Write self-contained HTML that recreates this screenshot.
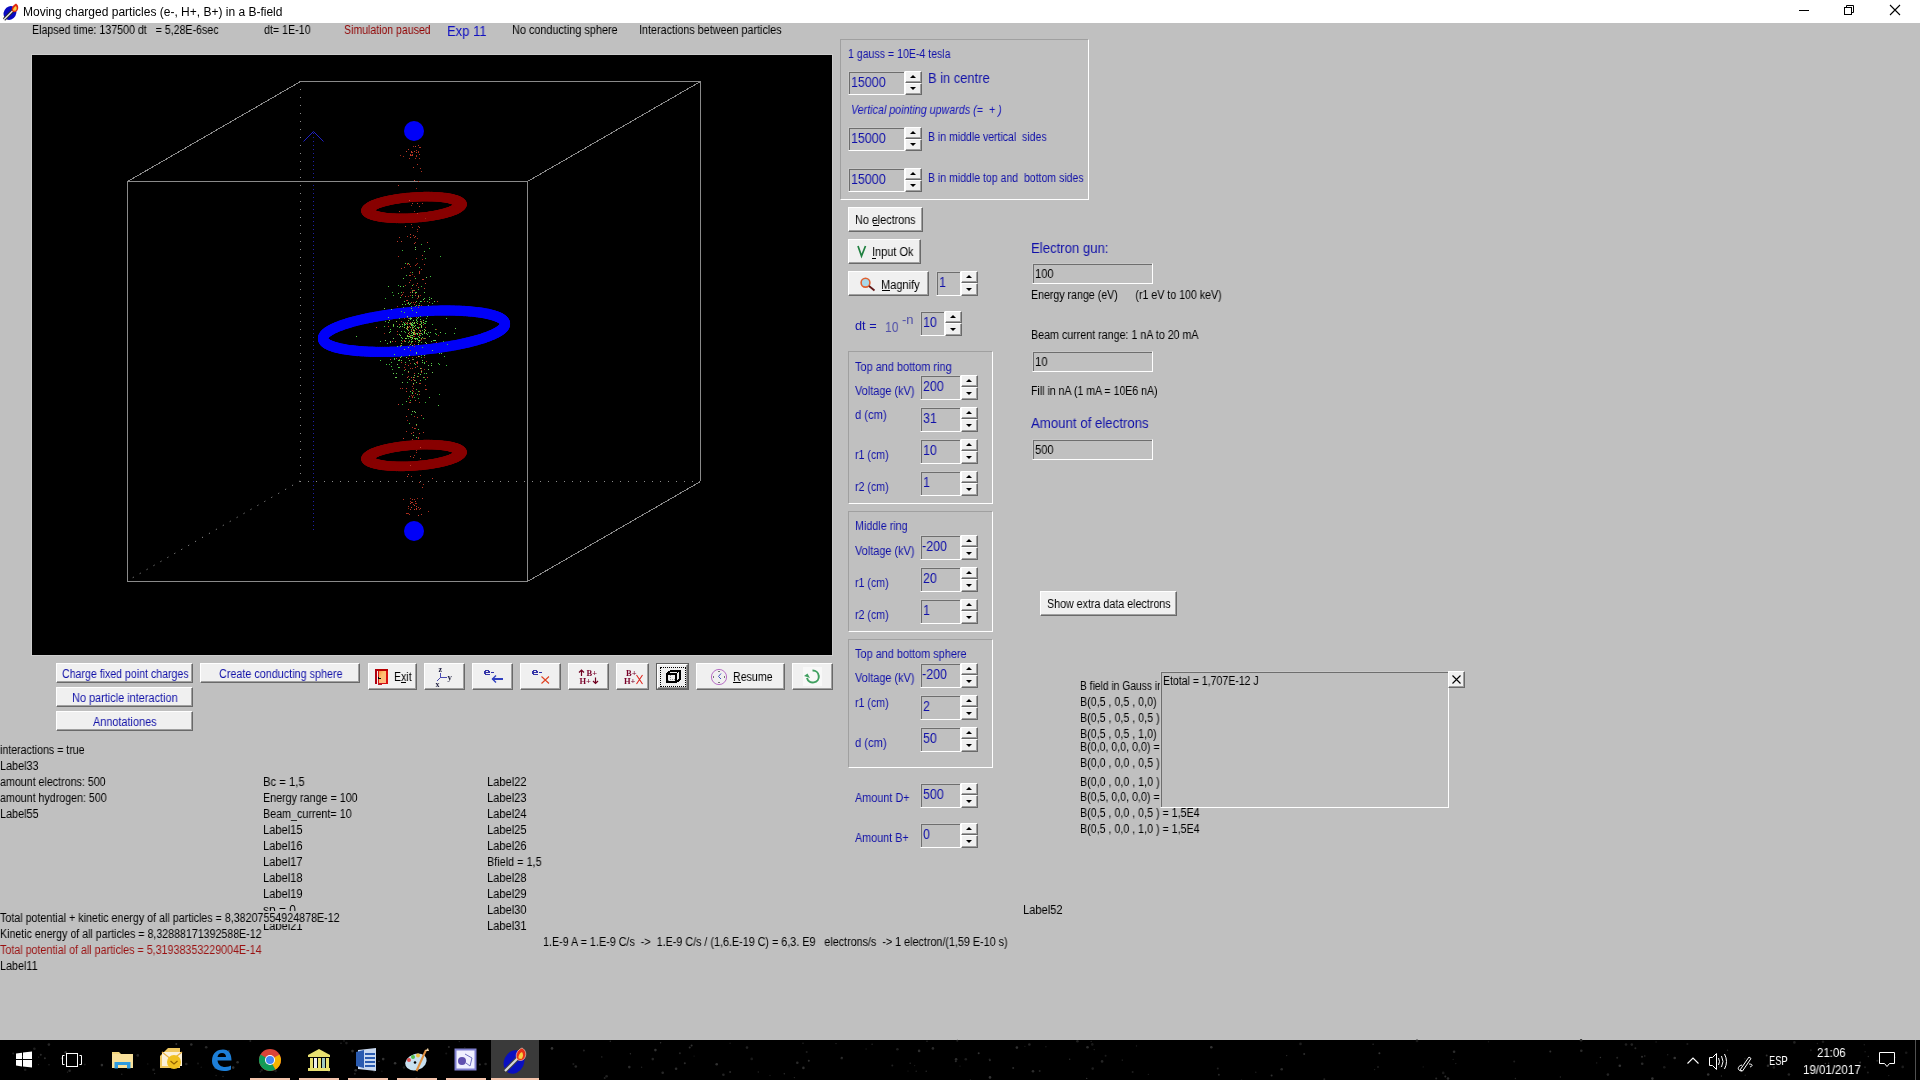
<!DOCTYPE html>
<html><head><meta charset="utf-8"><title>Moving charged particles</title>
<style>
html,body{margin:0;padding:0;}
body{width:1920px;height:1080px;position:relative;overflow:hidden;background:#C0C0C0;font-family:"Liberation Sans",sans-serif;}
.t{position:absolute;white-space:pre;line-height:normal;font-family:"Liberation Sans",sans-serif;will-change:transform;}
.rb{position:absolute;box-sizing:border-box;border:1px solid;border-color:#FFFFFF #696969 #696969 #FFFFFF;box-shadow:inset -1px -1px #A0A0A0;}
.sk{position:absolute;box-sizing:border-box;border:1px solid;border-color:#C8C8C8 #FFFFFF #FFFFFF #C8C8C8;box-shadow:inset 1px 1px #6E6E6E;}
.gb{position:absolute;border:1px solid;border-color:#A0A0A0 #FFFFFF #FFFFFF #A0A0A0;}
svg{position:absolute;overflow:visible;}
</style></head><body>

<div style="position:absolute;left:0px;top:0px;width:1920px;height:23px;background:#FFFFFF"></div>
<svg style="left:2px;top:3px" width="17" height="17" viewBox="0 0 17 17">
<ellipse cx="8" cy="10" rx="6.2" ry="7.2" fill="#0A0AC0" transform="rotate(30 8 10)"/>
<path d="M2 16.5 L11 7.5" stroke="#282828" stroke-width="3.2"/>
<path d="M2 16.5 L11 7.5" stroke="#E8E8E8" stroke-width="1.4"/>
<path d="M10 8 C9 5 11 2 14 0.5 C16.5 2 17 5.5 15 8 C13.5 9.5 11.5 9.5 10 8 Z" fill="#E02810"/>
<path d="M11 7.5 C11 5.5 12.5 3.5 14 3 C15 4.5 15 6.5 13.5 7.8 Z" fill="#FFD040"/>
</svg>
<span class="t" style="left:23.20px;top:5px;font-size:12px;color:#000;">Moving charged particles (e-, H+, B+) in a B-field</span>
<div style="position:absolute;left:1799px;top:10px;width:10px;height:1px;background:#000"></div>
<svg style="left:1843px;top:4px" width="12" height="12" viewBox="0 0 12 12">
<rect x="1.5" y="3.5" width="7" height="7" fill="none" stroke="#000" stroke-width="1"/>
<path d="M3.5 3.5 V1.5 H10.5 V8.5 H8.5" fill="none" stroke="#000" stroke-width="1"/>
</svg>
<svg style="left:1889px;top:4px" width="12" height="12" viewBox="0 0 12 12">
<path d="M1 1 L11 11 M11 1 L1 11" stroke="#000" stroke-width="1.1"/>
</svg>
<span class="t" style="left:32.20px;top:23px;font-size:12px;color:#000;transform:scale(0.8865,1.0000);transform-origin:0 11px;">Elapsed time: 137500 dt   = 5,28E-6sec</span>
<span class="t" style="left:264.20px;top:23px;font-size:12px;color:#000;transform:scale(0.8897,1.0000);transform-origin:0 11px;">dt= 1E-10</span>
<span class="t" style="left:344.20px;top:23px;font-size:12px;color:#900000;transform:scale(0.8770,1.0000);transform-origin:0 11px;">Simulation paused</span>
<span class="t" style="left:447.20px;top:23px;font-size:14px;color:#1010C0;transform:scale(0.9304,1.0000);transform-origin:0 13px;">Exp 11</span>
<span class="t" style="left:512.20px;top:23px;font-size:12px;color:#000;transform:scale(0.9045,1.0000);transform-origin:0 11px;">No conducting sphere</span>
<span class="t" style="left:639.20px;top:23px;font-size:12px;color:#000;transform:scale(0.8983,1.0000);transform-origin:0 11px;">Interactions between particles</span>
<div style="position:absolute;left:31px;top:54px;width:800px;height:600px;border:1px solid #CDCDCD;background:#000"></div>
<svg style="left:0;top:0" width="1920" height="1080" viewBox="0 0 1920 1080"><path d="M300.5 81 V481.5 H700" stroke="#8A8A8A" stroke-width="1" fill="none" stroke-dasharray="1 7" shape-rendering="crispEdges"/><path d="M300 481 L127 581" stroke="#8A8A8A" stroke-width="1" stroke-dasharray="1.2 6.8" fill="none"/><path d="M313.5 133 V533" stroke="#2020A8" stroke-width="1" stroke-dasharray="1 3" fill="none" shape-rendering="crispEdges"/><path d="M303.5 141.5 L313.5 131.5 L323.5 141.5" stroke="#2020C8" stroke-width="1" fill="none"/><rect x="127.5" y="181.5" width="400" height="400" stroke="#8A8A8A" stroke-width="1" fill="none" shape-rendering="crispEdges"/><path d="M300 81.5 H700.5 V481" stroke="#8A8A8A" stroke-width="1" fill="none" shape-rendering="crispEdges"/><path d="M127.5 181.5 L300.5 81.5 M527.5 181.5 L700.5 81.5 M527.5 581.5 L700.5 481.5" stroke="#8A8A8A" stroke-width="1" fill="none" shape-rendering="crispEdges"/><rect x="431" y="341" width="1" height="1" fill="#58D048"/><rect x="417" y="333" width="1" height="1" fill="#70D058"/><rect x="410" y="237" width="1" height="1" fill="#C84030"/><rect x="410" y="303" width="1" height="1" fill="#40C840"/><rect x="421" y="171" width="1" height="1" fill="#B03020"/><rect x="404" y="267" width="1" height="1" fill="#C03828"/><rect x="421" y="305" width="1" height="1" fill="#B03020"/><rect x="409" y="336" width="1" height="1" fill="#A0D040"/><rect x="417" y="338" width="1" height="1" fill="#90C838"/><rect x="416" y="352" width="1" height="1" fill="#A02818"/><rect x="417" y="203" width="1" height="1" fill="#C03828"/><rect x="401" y="340" width="1" height="1" fill="#40C840"/><rect x="436" y="329" width="1" height="1" fill="#A02818"/><rect x="411" y="414" width="1" height="1" fill="#38B838"/><rect x="431" y="298" width="1" height="1" fill="#58D048"/><rect x="401" y="309" width="1" height="1" fill="#38B838"/><rect x="411" y="341" width="1" height="1" fill="#38B838"/><rect x="369" y="319" width="1" height="1" fill="#58D048"/><rect x="398" y="404" width="1" height="1" fill="#C84030"/><rect x="422" y="216" width="1" height="1" fill="#C84030"/><rect x="425" y="338" width="1" height="1" fill="#C03828"/><rect x="407" y="420" width="1" height="1" fill="#A02818"/><rect x="418" y="438" width="1" height="1" fill="#C03828"/><rect x="418" y="340" width="1" height="1" fill="#A0D040"/><rect x="405" y="332" width="1" height="1" fill="#38B838"/><rect x="414" y="428" width="1" height="1" fill="#C03828"/><rect x="416" y="503" width="1" height="1" fill="#A02818"/><rect x="415" y="265" width="1" height="1" fill="#C03828"/><rect x="412" y="322" width="1" height="1" fill="#70D058"/><rect x="414" y="211" width="1" height="1" fill="#A02818"/><rect x="421" y="342" width="1" height="1" fill="#38B838"/><rect x="412" y="368" width="1" height="1" fill="#58D048"/><rect x="412" y="290" width="1" height="1" fill="#38B838"/><rect x="421" y="339" width="1" height="1" fill="#B03020"/><rect x="417" y="312" width="1" height="1" fill="#70D058"/><rect x="419" y="314" width="1" height="1" fill="#70D058"/><rect x="405" y="296" width="1" height="1" fill="#C84030"/><rect x="424" y="377" width="1" height="1" fill="#C03828"/><rect x="424" y="333" width="1" height="1" fill="#58D048"/><rect x="411" y="151" width="1" height="1" fill="#C84030"/><rect x="417" y="199" width="1" height="1" fill="#B03020"/><rect x="426" y="389" width="1" height="1" fill="#B03020"/><rect x="412" y="325" width="1" height="1" fill="#38B838"/><rect x="399" y="359" width="1" height="1" fill="#C03828"/><rect x="407" y="382" width="1" height="1" fill="#40C840"/><rect x="418" y="332" width="1" height="1" fill="#38B838"/><rect x="433" y="340" width="1" height="1" fill="#40C840"/><rect x="417" y="327" width="1" height="1" fill="#40C840"/><rect x="400" y="155" width="1" height="1" fill="#A02818"/><rect x="416" y="319" width="1" height="1" fill="#38B838"/><rect x="410" y="272" width="1" height="1" fill="#40C840"/><rect x="419" y="158" width="1" height="1" fill="#B03020"/><rect x="398" y="293" width="1" height="1" fill="#58D048"/><rect x="410" y="292" width="1" height="1" fill="#C03828"/><rect x="411" y="288" width="1" height="1" fill="#A02818"/><rect x="403" y="315" width="1" height="1" fill="#A0D040"/><rect x="413" y="235" width="1" height="1" fill="#C03828"/><rect x="446" y="318" width="1" height="1" fill="#40C840"/><rect x="412" y="272" width="1" height="1" fill="#40C840"/><rect x="418" y="181" width="1" height="1" fill="#C03828"/><rect x="368" y="318" width="1" height="1" fill="#C03828"/><rect x="415" y="393" width="1" height="1" fill="#C03828"/><rect x="415" y="292" width="1" height="1" fill="#40C840"/><rect x="413" y="327" width="1" height="1" fill="#38B838"/><rect x="412" y="311" width="1" height="1" fill="#40C840"/><rect x="395" y="314" width="1" height="1" fill="#70D058"/><rect x="426" y="277" width="1" height="1" fill="#70D058"/><rect x="399" y="237" width="1" height="1" fill="#C03828"/><rect x="433" y="345" width="1" height="1" fill="#40C840"/><rect x="417" y="352" width="1" height="1" fill="#70D058"/><rect x="411" y="329" width="1" height="1" fill="#40C840"/><rect x="424" y="251" width="1" height="1" fill="#58D048"/><rect x="414" y="333" width="1" height="1" fill="#C84030"/><rect x="400" y="335" width="1" height="1" fill="#58D048"/><rect x="443" y="341" width="1" height="1" fill="#38B838"/><rect x="404" y="341" width="1" height="1" fill="#58D048"/><rect x="424" y="292" width="1" height="1" fill="#58D048"/><rect x="423" y="338" width="1" height="1" fill="#90C838"/><rect x="408" y="318" width="1" height="1" fill="#A02818"/><rect x="422" y="360" width="1" height="1" fill="#70D058"/><rect x="426" y="318" width="1" height="1" fill="#38B838"/><rect x="405" y="341" width="1" height="1" fill="#58D048"/><rect x="404" y="327" width="1" height="1" fill="#90C838"/><rect x="413" y="320" width="1" height="1" fill="#70D058"/><rect x="421" y="355" width="1" height="1" fill="#40C840"/><rect x="400" y="286" width="1" height="1" fill="#58D048"/><rect x="423" y="324" width="1" height="1" fill="#C03828"/><rect x="419" y="313" width="1" height="1" fill="#38B838"/><rect x="424" y="338" width="1" height="1" fill="#40C840"/><rect x="407" y="442" width="1" height="1" fill="#C03828"/><rect x="397" y="311" width="1" height="1" fill="#40C840"/><rect x="402" y="388" width="1" height="1" fill="#B03020"/><rect x="405" y="369" width="1" height="1" fill="#C03828"/><rect x="410" y="318" width="1" height="1" fill="#70D058"/><rect x="414" y="397" width="1" height="1" fill="#38B838"/><rect x="413" y="290" width="1" height="1" fill="#C03828"/><rect x="410" y="348" width="1" height="1" fill="#58D048"/><rect x="408" y="342" width="1" height="1" fill="#58D048"/><rect x="415" y="367" width="1" height="1" fill="#C84030"/><rect x="412" y="341" width="1" height="1" fill="#90C838"/><rect x="411" y="318" width="1" height="1" fill="#A0D040"/><rect x="430" y="332" width="1" height="1" fill="#58D048"/><rect x="414" y="276" width="1" height="1" fill="#A02818"/><rect x="432" y="351" width="1" height="1" fill="#40C840"/><rect x="425" y="258" width="1" height="1" fill="#38B838"/><rect x="421" y="415" width="1" height="1" fill="#C84030"/><rect x="411" y="502" width="1" height="1" fill="#C84030"/><rect x="410" y="319" width="1" height="1" fill="#40C840"/><rect x="411" y="306" width="1" height="1" fill="#58D048"/><rect x="406" y="328" width="1" height="1" fill="#58D048"/><rect x="420" y="508" width="1" height="1" fill="#C03828"/><rect x="424" y="288" width="1" height="1" fill="#C84030"/><rect x="407" y="323" width="1" height="1" fill="#38B838"/><rect x="418" y="336" width="1" height="1" fill="#40C840"/><rect x="408" y="336" width="1" height="1" fill="#A0D040"/><rect x="411" y="198" width="1" height="1" fill="#C84030"/><rect x="407" y="300" width="1" height="1" fill="#C84030"/><rect x="414" y="237" width="1" height="1" fill="#B03020"/><rect x="432" y="372" width="1" height="1" fill="#70D058"/><rect x="410" y="323" width="1" height="1" fill="#58D048"/><rect x="413" y="435" width="1" height="1" fill="#70D058"/><rect x="409" y="396" width="1" height="1" fill="#38B838"/><rect x="423" y="484" width="1" height="1" fill="#B03020"/><rect x="393" y="324" width="1" height="1" fill="#58D048"/><rect x="408" y="506" width="1" height="1" fill="#C03828"/><rect x="410" y="317" width="1" height="1" fill="#40C840"/><rect x="408" y="303" width="1" height="1" fill="#58D048"/><rect x="416" y="305" width="1" height="1" fill="#40C840"/><rect x="402" y="341" width="1" height="1" fill="#A02818"/><rect x="412" y="397" width="1" height="1" fill="#C03828"/><rect x="384" y="308" width="1" height="1" fill="#70D058"/><rect x="441" y="353" width="1" height="1" fill="#58D048"/><rect x="438" y="343" width="1" height="1" fill="#B03020"/><rect x="439" y="364" width="1" height="1" fill="#40C840"/><rect x="416" y="156" width="1" height="1" fill="#B03020"/><rect x="402" y="349" width="1" height="1" fill="#38B838"/><rect x="414" y="331" width="1" height="1" fill="#B03020"/><rect x="420" y="295" width="1" height="1" fill="#A02818"/><rect x="407" y="236" width="1" height="1" fill="#B03020"/><rect x="410" y="336" width="1" height="1" fill="#A02818"/><rect x="427" y="242" width="1" height="1" fill="#C84030"/><rect x="406" y="443" width="1" height="1" fill="#C84030"/><rect x="454" y="333" width="1" height="1" fill="#40C840"/><rect x="401" y="343" width="1" height="1" fill="#90C838"/><rect x="415" y="380" width="1" height="1" fill="#C84030"/><rect x="429" y="248" width="1" height="1" fill="#38B838"/><rect x="415" y="346" width="1" height="1" fill="#A02818"/><rect x="371" y="317" width="1" height="1" fill="#40C840"/><rect x="408" y="336" width="1" height="1" fill="#38B838"/><rect x="393" y="338" width="1" height="1" fill="#70D058"/><rect x="415" y="293" width="1" height="1" fill="#C84030"/><rect x="416" y="329" width="1" height="1" fill="#90C838"/><rect x="420" y="340" width="1" height="1" fill="#A02818"/><rect x="429" y="297" width="1" height="1" fill="#38B838"/><rect x="421" y="325" width="1" height="1" fill="#70D058"/><rect x="420" y="374" width="1" height="1" fill="#58D048"/><rect x="422" y="334" width="1" height="1" fill="#70D058"/><rect x="414" y="290" width="1" height="1" fill="#C84030"/><rect x="419" y="333" width="1" height="1" fill="#B03020"/><rect x="385" y="321" width="1" height="1" fill="#38B838"/><rect x="408" y="320" width="1" height="1" fill="#A0D040"/><rect x="408" y="409" width="1" height="1" fill="#C84030"/><rect x="412" y="332" width="1" height="1" fill="#70D058"/><rect x="444" y="356" width="1" height="1" fill="#40C840"/><rect x="416" y="155" width="1" height="1" fill="#A02818"/><rect x="426" y="443" width="1" height="1" fill="#B03020"/><rect x="406" y="431" width="1" height="1" fill="#B03020"/><rect x="406" y="391" width="1" height="1" fill="#C84030"/><rect x="418" y="376" width="1" height="1" fill="#B03020"/><rect x="396" y="358" width="1" height="1" fill="#C03828"/><rect x="412" y="152" width="1" height="1" fill="#C03828"/><rect x="420" y="335" width="1" height="1" fill="#38B838"/><rect x="439" y="353" width="1" height="1" fill="#40C840"/><rect x="400" y="357" width="1" height="1" fill="#70D058"/><rect x="412" y="155" width="1" height="1" fill="#C03828"/><rect x="421" y="308" width="1" height="1" fill="#B03020"/><rect x="425" y="327" width="1" height="1" fill="#C03828"/><rect x="417" y="361" width="1" height="1" fill="#A02818"/><rect x="421" y="327" width="1" height="1" fill="#70D058"/><rect x="446" y="365" width="1" height="1" fill="#40C840"/><rect x="412" y="324" width="1" height="1" fill="#90C838"/><rect x="416" y="320" width="1" height="1" fill="#58D048"/><rect x="369" y="313" width="1" height="1" fill="#58D048"/><rect x="414" y="380" width="1" height="1" fill="#70D058"/><rect x="401" y="337" width="1" height="1" fill="#58D048"/><rect x="412" y="203" width="1" height="1" fill="#C03828"/><rect x="399" y="324" width="1" height="1" fill="#C84030"/><rect x="412" y="154" width="1" height="1" fill="#B03020"/><rect x="407" y="324" width="1" height="1" fill="#40C840"/><rect x="388" y="286" width="1" height="1" fill="#58D048"/><rect x="420" y="383" width="1" height="1" fill="#C03828"/><rect x="404" y="340" width="1" height="1" fill="#C84030"/><rect x="424" y="331" width="1" height="1" fill="#90C838"/><rect x="411" y="339" width="1" height="1" fill="#70D058"/><rect x="419" y="509" width="1" height="1" fill="#A02818"/><rect x="419" y="227" width="1" height="1" fill="#C03828"/><rect x="406" y="151" width="1" height="1" fill="#C84030"/><rect x="415" y="158" width="1" height="1" fill="#B03020"/><rect x="414" y="334" width="1" height="1" fill="#A0D040"/><rect x="404" y="325" width="1" height="1" fill="#38B838"/><rect x="412" y="357" width="1" height="1" fill="#A02818"/><rect x="419" y="335" width="1" height="1" fill="#B03020"/><rect x="369" y="317" width="1" height="1" fill="#38B838"/><rect x="414" y="338" width="1" height="1" fill="#40C840"/><rect x="407" y="317" width="1" height="1" fill="#90C838"/><rect x="417" y="376" width="1" height="1" fill="#40C840"/><rect x="395" y="311" width="1" height="1" fill="#A02818"/><rect x="409" y="318" width="1" height="1" fill="#38B838"/><rect x="415" y="249" width="1" height="1" fill="#70D058"/><rect x="411" y="343" width="1" height="1" fill="#A02818"/><rect x="439" y="394" width="1" height="1" fill="#38B838"/><rect x="419" y="267" width="1" height="1" fill="#38B838"/><rect x="413" y="333" width="1" height="1" fill="#A0D040"/><rect x="418" y="287" width="1" height="1" fill="#C03828"/><rect x="418" y="356" width="1" height="1" fill="#40C840"/><rect x="413" y="146" width="1" height="1" fill="#A02818"/><rect x="418" y="295" width="1" height="1" fill="#C03828"/><rect x="405" y="311" width="1" height="1" fill="#C03828"/><rect x="398" y="285" width="1" height="1" fill="#38B838"/><rect x="413" y="355" width="1" height="1" fill="#C03828"/><rect x="408" y="320" width="1" height="1" fill="#90C838"/><rect x="395" y="377" width="1" height="1" fill="#70D058"/><rect x="427" y="377" width="1" height="1" fill="#C84030"/><rect x="417" y="339" width="1" height="1" fill="#40C840"/><rect x="394" y="358" width="1" height="1" fill="#40C840"/><rect x="423" y="377" width="1" height="1" fill="#40C840"/><rect x="419" y="305" width="1" height="1" fill="#58D048"/><rect x="417" y="164" width="1" height="1" fill="#B03020"/><rect x="408" y="358" width="1" height="1" fill="#B03020"/><rect x="412" y="327" width="1" height="1" fill="#70D058"/><rect x="399" y="327" width="1" height="1" fill="#40C840"/><rect x="415" y="325" width="1" height="1" fill="#38B838"/><rect x="405" y="338" width="1" height="1" fill="#A0D040"/><rect x="393" y="373" width="1" height="1" fill="#70D058"/><rect x="398" y="360" width="1" height="1" fill="#58D048"/><rect x="397" y="331" width="1" height="1" fill="#C03828"/><rect x="412" y="315" width="1" height="1" fill="#70D058"/><rect x="391" y="366" width="1" height="1" fill="#40C840"/><rect x="416" y="362" width="1" height="1" fill="#C84030"/><rect x="413" y="195" width="1" height="1" fill="#A02818"/><rect x="409" y="345" width="1" height="1" fill="#38B838"/><rect x="417" y="394" width="1" height="1" fill="#40C840"/><rect x="425" y="323" width="1" height="1" fill="#40C840"/><rect x="424" y="323" width="1" height="1" fill="#38B838"/><rect x="416" y="329" width="1" height="1" fill="#C84030"/><rect x="399" y="334" width="1" height="1" fill="#58D048"/><rect x="397" y="241" width="1" height="1" fill="#C03828"/><rect x="390" y="341" width="1" height="1" fill="#70D058"/><rect x="415" y="412" width="1" height="1" fill="#70D058"/><rect x="420" y="475" width="1" height="1" fill="#A02818"/><rect x="425" y="385" width="1" height="1" fill="#B03020"/><rect x="427" y="312" width="1" height="1" fill="#40C840"/><rect x="424" y="357" width="1" height="1" fill="#A02818"/><rect x="411" y="333" width="1" height="1" fill="#40C840"/><rect x="413" y="334" width="1" height="1" fill="#70D058"/><rect x="419" y="337" width="1" height="1" fill="#A0D040"/><rect x="416" y="508" width="1" height="1" fill="#C84030"/><rect x="403" y="156" width="1" height="1" fill="#A02818"/><rect x="403" y="307" width="1" height="1" fill="#70D058"/><rect x="407" y="329" width="1" height="1" fill="#A0D040"/><rect x="424" y="298" width="1" height="1" fill="#40C840"/><rect x="384" y="326" width="1" height="1" fill="#40C840"/><rect x="419" y="391" width="1" height="1" fill="#C03828"/><rect x="418" y="429" width="1" height="1" fill="#40C840"/><rect x="402" y="250" width="1" height="1" fill="#38B838"/><rect x="420" y="324" width="1" height="1" fill="#90C838"/><rect x="413" y="167" width="1" height="1" fill="#C03828"/><rect x="425" y="321" width="1" height="1" fill="#40C840"/><rect x="397" y="310" width="1" height="1" fill="#70D058"/><rect x="408" y="313" width="1" height="1" fill="#58D048"/><rect x="411" y="433" width="1" height="1" fill="#C84030"/><rect x="413" y="359" width="1" height="1" fill="#40C840"/><rect x="421" y="338" width="1" height="1" fill="#90C838"/><rect x="412" y="396" width="1" height="1" fill="#A02818"/><rect x="418" y="391" width="1" height="1" fill="#40C840"/><rect x="417" y="417" width="1" height="1" fill="#C84030"/><rect x="404" y="324" width="1" height="1" fill="#38B838"/><rect x="412" y="386" width="1" height="1" fill="#B03020"/><rect x="395" y="341" width="1" height="1" fill="#C03828"/><rect x="394" y="359" width="1" height="1" fill="#38B838"/><rect x="414" y="338" width="1" height="1" fill="#C84030"/><rect x="411" y="380" width="1" height="1" fill="#B03020"/><rect x="417" y="334" width="1" height="1" fill="#70D058"/><rect x="419" y="402" width="1" height="1" fill="#B03020"/><rect x="417" y="347" width="1" height="1" fill="#58D048"/><rect x="392" y="317" width="1" height="1" fill="#38B838"/><rect x="412" y="469" width="1" height="1" fill="#B03020"/><rect x="455" y="328" width="1" height="1" fill="#70D058"/><rect x="411" y="339" width="1" height="1" fill="#40C840"/><rect x="429" y="397" width="1" height="1" fill="#58D048"/><rect x="422" y="279" width="1" height="1" fill="#C03828"/><rect x="393" y="325" width="1" height="1" fill="#90C838"/><rect x="402" y="404" width="1" height="1" fill="#38B838"/><rect x="417" y="350" width="1" height="1" fill="#90C838"/><rect x="429" y="440" width="1" height="1" fill="#A02818"/><rect x="411" y="335" width="1" height="1" fill="#40C840"/><rect x="445" y="333" width="1" height="1" fill="#40C840"/><rect x="421" y="244" width="1" height="1" fill="#38B838"/><rect x="400" y="326" width="1" height="1" fill="#70D058"/><rect x="411" y="224" width="1" height="1" fill="#A02818"/><rect x="428" y="311" width="1" height="1" fill="#38B838"/><rect x="407" y="322" width="1" height="1" fill="#38B838"/><rect x="385" y="340" width="1" height="1" fill="#70D058"/><rect x="419" y="341" width="1" height="1" fill="#38B838"/><rect x="433" y="313" width="1" height="1" fill="#A02818"/><rect x="411" y="507" width="1" height="1" fill="#C84030"/><rect x="418" y="317" width="1" height="1" fill="#58D048"/><rect x="419" y="394" width="1" height="1" fill="#C03828"/><rect x="425" y="342" width="1" height="1" fill="#70D058"/><rect x="408" y="372" width="1" height="1" fill="#C03828"/><rect x="406" y="388" width="1" height="1" fill="#C03828"/><rect x="414" y="334" width="1" height="1" fill="#58D048"/><rect x="407" y="303" width="1" height="1" fill="#A02818"/><rect x="421" y="322" width="1" height="1" fill="#38B838"/><rect x="410" y="266" width="1" height="1" fill="#B03020"/><rect x="407" y="335" width="1" height="1" fill="#90C838"/><rect x="419" y="334" width="1" height="1" fill="#C84030"/><rect x="408" y="327" width="1" height="1" fill="#C03828"/><rect x="406" y="513" width="1" height="1" fill="#B03020"/><rect x="419" y="272" width="1" height="1" fill="#B03020"/><rect x="436" y="334" width="1" height="1" fill="#40C840"/><rect x="435" y="340" width="1" height="1" fill="#70D058"/><rect x="405" y="304" width="1" height="1" fill="#58D048"/><rect x="420" y="346" width="1" height="1" fill="#C84030"/><rect x="414" y="180" width="1" height="1" fill="#C84030"/><rect x="412" y="227" width="1" height="1" fill="#A02818"/><rect x="403" y="292" width="1" height="1" fill="#B03020"/><rect x="407" y="323" width="1" height="1" fill="#B03020"/><rect x="431" y="365" width="1" height="1" fill="#70D058"/><rect x="414" y="505" width="1" height="1" fill="#C84030"/><rect x="411" y="302" width="1" height="1" fill="#C03828"/><rect x="397" y="364" width="1" height="1" fill="#70D058"/><rect x="435" y="347" width="1" height="1" fill="#40C840"/><rect x="402" y="374" width="1" height="1" fill="#38B838"/><rect x="419" y="482" width="1" height="1" fill="#C03828"/><rect x="413" y="309" width="1" height="1" fill="#90C838"/><rect x="404" y="301" width="1" height="1" fill="#58D048"/><rect x="413" y="302" width="1" height="1" fill="#B03020"/><rect x="407" y="327" width="1" height="1" fill="#70D058"/><rect x="402" y="338" width="1" height="1" fill="#38B838"/><rect x="415" y="242" width="1" height="1" fill="#B03020"/><rect x="389" y="315" width="1" height="1" fill="#40C840"/><rect x="418" y="296" width="1" height="1" fill="#70D058"/><rect x="413" y="316" width="1" height="1" fill="#90C838"/><rect x="409" y="360" width="1" height="1" fill="#58D048"/><rect x="439" y="344" width="1" height="1" fill="#58D048"/><rect x="398" y="256" width="1" height="1" fill="#B03020"/><rect x="393" y="295" width="1" height="1" fill="#38B838"/><rect x="410" y="295" width="1" height="1" fill="#A02818"/><rect x="415" y="461" width="1" height="1" fill="#C84030"/><rect x="417" y="353" width="1" height="1" fill="#90C838"/><rect x="410" y="400" width="1" height="1" fill="#38B838"/><rect x="418" y="151" width="1" height="1" fill="#A02818"/><rect x="414" y="344" width="1" height="1" fill="#C03828"/><rect x="419" y="383" width="1" height="1" fill="#C03828"/><rect x="414" y="314" width="1" height="1" fill="#C03828"/><rect x="426" y="373" width="1" height="1" fill="#58D048"/><rect x="414" y="350" width="1" height="1" fill="#A02818"/><rect x="407" y="348" width="1" height="1" fill="#58D048"/><rect x="431" y="363" width="1" height="1" fill="#58D048"/><rect x="405" y="465" width="1" height="1" fill="#B03020"/><rect x="418" y="226" width="1" height="1" fill="#B03020"/><rect x="425" y="314" width="1" height="1" fill="#C03828"/><rect x="416" y="317" width="1" height="1" fill="#C03828"/><rect x="410" y="456" width="1" height="1" fill="#C03828"/><rect x="411" y="342" width="1" height="1" fill="#38B838"/><rect x="413" y="379" width="1" height="1" fill="#C03828"/><rect x="414" y="338" width="1" height="1" fill="#A0D040"/><rect x="408" y="347" width="1" height="1" fill="#C03828"/><rect x="418" y="297" width="1" height="1" fill="#B03020"/><rect x="418" y="332" width="1" height="1" fill="#A0D040"/><rect x="416" y="258" width="1" height="1" fill="#B03020"/><rect x="418" y="344" width="1" height="1" fill="#A0D040"/><rect x="413" y="469" width="1" height="1" fill="#C84030"/><rect x="421" y="269" width="1" height="1" fill="#C03828"/><rect x="402" y="324" width="1" height="1" fill="#A0D040"/><rect x="410" y="234" width="1" height="1" fill="#C84030"/><rect x="401" y="295" width="1" height="1" fill="#C03828"/><rect x="408" y="338" width="1" height="1" fill="#38B838"/><rect x="412" y="499" width="1" height="1" fill="#C03828"/><rect x="426" y="343" width="1" height="1" fill="#A0D040"/><rect x="416" y="338" width="1" height="1" fill="#C03828"/><rect x="405" y="316" width="1" height="1" fill="#58D048"/><rect x="415" y="306" width="1" height="1" fill="#A0D040"/><rect x="397" y="334" width="1" height="1" fill="#B03020"/><rect x="419" y="333" width="1" height="1" fill="#58D048"/><rect x="416" y="322" width="1" height="1" fill="#40C840"/><rect x="440" y="256" width="1" height="1" fill="#38B838"/><rect x="415" y="312" width="1" height="1" fill="#58D048"/><rect x="408" y="351" width="1" height="1" fill="#70D058"/><rect x="405" y="322" width="1" height="1" fill="#A02818"/><rect x="388" y="322" width="1" height="1" fill="#58D048"/><rect x="411" y="311" width="1" height="1" fill="#40C840"/><rect x="410" y="322" width="1" height="1" fill="#38B838"/><rect x="409" y="264" width="1" height="1" fill="#C84030"/><rect x="404" y="318" width="1" height="1" fill="#A02818"/><rect x="401" y="321" width="1" height="1" fill="#C03828"/><rect x="398" y="367" width="1" height="1" fill="#58D048"/><rect x="412" y="411" width="1" height="1" fill="#70D058"/><rect x="418" y="145" width="1" height="1" fill="#B03020"/><rect x="421" y="372" width="1" height="1" fill="#C03828"/><rect x="424" y="362" width="1" height="1" fill="#38B838"/><rect x="438" y="363" width="1" height="1" fill="#38B838"/><rect x="396" y="377" width="1" height="1" fill="#70D058"/><rect x="409" y="444" width="1" height="1" fill="#A02818"/><rect x="405" y="315" width="1" height="1" fill="#B03020"/><rect x="427" y="352" width="1" height="1" fill="#70D058"/><rect x="416" y="382" width="1" height="1" fill="#58D048"/><rect x="423" y="464" width="1" height="1" fill="#C03828"/><rect x="410" y="155" width="1" height="1" fill="#C84030"/><rect x="389" y="332" width="1" height="1" fill="#70D058"/><rect x="406" y="338" width="1" height="1" fill="#70D058"/><rect x="376" y="327" width="1" height="1" fill="#C84030"/><rect x="411" y="395" width="1" height="1" fill="#A02818"/><rect x="388" y="317" width="1" height="1" fill="#70D058"/><rect x="409" y="345" width="1" height="1" fill="#A02818"/><rect x="411" y="325" width="1" height="1" fill="#70D058"/><rect x="411" y="152" width="1" height="1" fill="#C03828"/><rect x="420" y="468" width="1" height="1" fill="#A02818"/><rect x="415" y="278" width="1" height="1" fill="#C03828"/><rect x="420" y="314" width="1" height="1" fill="#70D058"/><rect x="401" y="268" width="1" height="1" fill="#C03828"/><rect x="407" y="326" width="1" height="1" fill="#A0D040"/><rect x="418" y="342" width="1" height="1" fill="#58D048"/><rect x="424" y="315" width="1" height="1" fill="#58D048"/><rect x="412" y="393" width="1" height="1" fill="#70D058"/><rect x="415" y="341" width="1" height="1" fill="#C03828"/><rect x="407" y="327" width="1" height="1" fill="#A0D040"/><rect x="424" y="363" width="1" height="1" fill="#58D048"/><rect x="435" y="329" width="1" height="1" fill="#38B838"/><rect x="391" y="354" width="1" height="1" fill="#70D058"/><rect x="433" y="344" width="1" height="1" fill="#40C840"/><rect x="416" y="437" width="1" height="1" fill="#58D048"/><rect x="416" y="264" width="1" height="1" fill="#A02818"/><rect x="414" y="151" width="1" height="1" fill="#C03828"/><rect x="404" y="317" width="1" height="1" fill="#40C840"/><rect x="415" y="325" width="1" height="1" fill="#58D048"/><rect x="409" y="282" width="1" height="1" fill="#C84030"/><rect x="425" y="199" width="1" height="1" fill="#C84030"/><rect x="429" y="336" width="1" height="1" fill="#58D048"/><rect x="418" y="328" width="1" height="1" fill="#70D058"/><rect x="419" y="303" width="1" height="1" fill="#38B838"/><rect x="414" y="333" width="1" height="1" fill="#C03828"/><rect x="410" y="350" width="1" height="1" fill="#38B838"/><rect x="414" y="373" width="1" height="1" fill="#C84030"/><rect x="412" y="292" width="1" height="1" fill="#70D058"/><rect x="419" y="154" width="1" height="1" fill="#B03020"/><rect x="414" y="416" width="1" height="1" fill="#B03020"/><rect x="419" y="147" width="1" height="1" fill="#B03020"/><rect x="408" y="513" width="1" height="1" fill="#A02818"/><rect x="404" y="367" width="1" height="1" fill="#B03020"/><rect x="411" y="323" width="1" height="1" fill="#70D058"/><rect x="422" y="487" width="1" height="1" fill="#C03828"/><rect x="424" y="301" width="1" height="1" fill="#C84030"/><rect x="422" y="330" width="1" height="1" fill="#40C840"/><rect x="408" y="310" width="1" height="1" fill="#40C840"/><rect x="412" y="335" width="1" height="1" fill="#A0D040"/><rect x="413" y="432" width="1" height="1" fill="#C84030"/><rect x="412" y="312" width="1" height="1" fill="#40C840"/><rect x="386" y="364" width="1" height="1" fill="#40C840"/><rect x="436" y="342" width="1" height="1" fill="#C03828"/><rect x="424" y="332" width="1" height="1" fill="#70D058"/><rect x="416" y="292" width="1" height="1" fill="#58D048"/><rect x="405" y="263" width="1" height="1" fill="#40C840"/><rect x="390" y="329" width="1" height="1" fill="#58D048"/><rect x="428" y="369" width="1" height="1" fill="#70D058"/><rect x="412" y="368" width="1" height="1" fill="#B03020"/><rect x="418" y="515" width="1" height="1" fill="#C84030"/><rect x="401" y="360" width="1" height="1" fill="#58D048"/><rect x="402" y="315" width="1" height="1" fill="#C03828"/><rect x="414" y="304" width="1" height="1" fill="#C03828"/><rect x="426" y="333" width="1" height="1" fill="#58D048"/><rect x="418" y="315" width="1" height="1" fill="#C84030"/><rect x="401" y="362" width="1" height="1" fill="#C03828"/><rect x="415" y="328" width="1" height="1" fill="#90C838"/><rect x="415" y="333" width="1" height="1" fill="#C84030"/><rect x="409" y="315" width="1" height="1" fill="#38B838"/><rect x="409" y="379" width="1" height="1" fill="#58D048"/><rect x="412" y="326" width="1" height="1" fill="#A02818"/><rect x="356" y="336" width="1" height="1" fill="#58D048"/><rect x="426" y="321" width="1" height="1" fill="#40C840"/><rect x="415" y="200" width="1" height="1" fill="#C03828"/><rect x="412" y="439" width="1" height="1" fill="#B03020"/><rect x="403" y="278" width="1" height="1" fill="#58D048"/><rect x="404" y="331" width="1" height="1" fill="#38B838"/><rect x="423" y="345" width="1" height="1" fill="#C03828"/><rect x="409" y="334" width="1" height="1" fill="#B03020"/><rect x="410" y="498" width="1" height="1" fill="#A02818"/><rect x="426" y="361" width="1" height="1" fill="#C03828"/><rect x="411" y="377" width="1" height="1" fill="#C84030"/><rect x="410" y="335" width="1" height="1" fill="#38B838"/><rect x="390" y="331" width="1" height="1" fill="#40C840"/><rect x="370" y="349" width="1" height="1" fill="#40C840"/><rect x="417" y="229" width="1" height="1" fill="#A02818"/><rect x="411" y="330" width="1" height="1" fill="#B03020"/><rect x="405" y="226" width="1" height="1" fill="#C84030"/><rect x="424" y="338" width="1" height="1" fill="#40C840"/><rect x="377" y="350" width="1" height="1" fill="#40C840"/><rect x="416" y="285" width="1" height="1" fill="#40C840"/><rect x="419" y="327" width="1" height="1" fill="#C03828"/><rect x="409" y="323" width="1" height="1" fill="#C84030"/><rect x="419" y="310" width="1" height="1" fill="#B03020"/><rect x="425" y="330" width="1" height="1" fill="#A0D040"/><rect x="432" y="307" width="1" height="1" fill="#38B838"/><rect x="420" y="331" width="1" height="1" fill="#58D048"/><rect x="425" y="402" width="1" height="1" fill="#38B838"/><rect x="406" y="357" width="1" height="1" fill="#70D058"/><rect x="415" y="146" width="1" height="1" fill="#C84030"/><rect x="413" y="457" width="1" height="1" fill="#C03828"/><rect x="415" y="295" width="1" height="1" fill="#B03020"/><rect x="428" y="305" width="1" height="1" fill="#70D058"/><rect x="408" y="508" width="1" height="1" fill="#A02818"/><rect x="423" y="338" width="1" height="1" fill="#A02818"/><rect x="415" y="400" width="1" height="1" fill="#C84030"/><rect x="416" y="309" width="1" height="1" fill="#38B838"/><rect x="423" y="320" width="1" height="1" fill="#70D058"/><rect x="407" y="476" width="1" height="1" fill="#C84030"/><rect x="416" y="452" width="1" height="1" fill="#A02818"/><rect x="416" y="333" width="1" height="1" fill="#58D048"/><rect x="420" y="464" width="1" height="1" fill="#C03828"/><rect x="408" y="336" width="1" height="1" fill="#40C840"/><rect x="412" y="502" width="1" height="1" fill="#B03020"/><rect x="414" y="336" width="1" height="1" fill="#A02818"/><rect x="419" y="330" width="1" height="1" fill="#70D058"/><rect x="387" y="343" width="1" height="1" fill="#40C840"/><rect x="428" y="365" width="1" height="1" fill="#70D058"/><rect x="415" y="334" width="1" height="1" fill="#C03828"/><rect x="417" y="351" width="1" height="1" fill="#40C840"/><rect x="417" y="366" width="1" height="1" fill="#C03828"/><rect x="412" y="359" width="1" height="1" fill="#C84030"/><rect x="400" y="388" width="1" height="1" fill="#B03020"/><rect x="407" y="513" width="1" height="1" fill="#A02818"/><rect x="417" y="231" width="1" height="1" fill="#A02818"/><rect x="376" y="348" width="1" height="1" fill="#40C840"/><rect x="413" y="384" width="1" height="1" fill="#C03828"/><rect x="407" y="336" width="1" height="1" fill="#90C838"/><rect x="408" y="350" width="1" height="1" fill="#40C840"/><rect x="416" y="425" width="1" height="1" fill="#C03828"/><rect x="420" y="349" width="1" height="1" fill="#38B838"/><rect x="421" y="370" width="1" height="1" fill="#B03020"/><rect x="412" y="392" width="1" height="1" fill="#38B838"/><rect x="397" y="306" width="1" height="1" fill="#A02818"/><rect x="413" y="383" width="1" height="1" fill="#70D058"/><rect x="431" y="348" width="1" height="1" fill="#58D048"/><rect x="405" y="285" width="1" height="1" fill="#B03020"/><rect x="409" y="341" width="1" height="1" fill="#40C840"/><rect x="401" y="295" width="1" height="1" fill="#C84030"/><rect x="399" y="211" width="1" height="1" fill="#B03020"/><rect x="405" y="316" width="1" height="1" fill="#38B838"/><rect x="425" y="283" width="1" height="1" fill="#C84030"/><rect x="420" y="301" width="1" height="1" fill="#70D058"/><rect x="411" y="337" width="1" height="1" fill="#58D048"/><rect x="403" y="499" width="1" height="1" fill="#B03020"/><rect x="414" y="330" width="1" height="1" fill="#90C838"/><rect x="432" y="478" width="1" height="1" fill="#C03828"/><rect x="409" y="158" width="1" height="1" fill="#B03020"/><rect x="408" y="474" width="1" height="1" fill="#C03828"/><rect x="419" y="314" width="1" height="1" fill="#38B838"/><rect x="408" y="302" width="1" height="1" fill="#58D048"/><rect x="416" y="301" width="1" height="1" fill="#58D048"/><rect x="414" y="332" width="1" height="1" fill="#90C838"/><rect x="429" y="299" width="1" height="1" fill="#70D058"/><rect x="416" y="338" width="1" height="1" fill="#38B838"/><rect x="413" y="391" width="1" height="1" fill="#A02818"/><rect x="421" y="368" width="1" height="1" fill="#C84030"/><rect x="415" y="315" width="1" height="1" fill="#90C838"/><rect x="408" y="365" width="1" height="1" fill="#C03828"/><rect x="420" y="330" width="1" height="1" fill="#B03020"/><rect x="408" y="333" width="1" height="1" fill="#A0D040"/><rect x="415" y="315" width="1" height="1" fill="#70D058"/><rect x="423" y="432" width="1" height="1" fill="#C03828"/><rect x="422" y="498" width="1" height="1" fill="#C03828"/><rect x="410" y="280" width="1" height="1" fill="#A02818"/><rect x="418" y="332" width="1" height="1" fill="#58D048"/><rect x="417" y="363" width="1" height="1" fill="#C84030"/><rect x="389" y="313" width="1" height="1" fill="#40C840"/><rect x="405" y="362" width="1" height="1" fill="#40C840"/><rect x="419" y="334" width="1" height="1" fill="#A02818"/><rect x="408" y="342" width="1" height="1" fill="#38B838"/><rect x="412" y="324" width="1" height="1" fill="#58D048"/><rect x="388" y="312" width="1" height="1" fill="#A02818"/><rect x="415" y="295" width="1" height="1" fill="#C84030"/><rect x="416" y="215" width="1" height="1" fill="#B03020"/><rect x="419" y="351" width="1" height="1" fill="#40C840"/><rect x="392" y="292" width="1" height="1" fill="#38B838"/><rect x="392" y="369" width="1" height="1" fill="#38B838"/><rect x="409" y="304" width="1" height="1" fill="#58D048"/><rect x="408" y="398" width="1" height="1" fill="#B03020"/><rect x="410" y="503" width="1" height="1" fill="#C84030"/><rect x="411" y="155" width="1" height="1" fill="#A02818"/><rect x="408" y="149" width="1" height="1" fill="#C03828"/><rect x="419" y="305" width="1" height="1" fill="#40C840"/><rect x="412" y="427" width="1" height="1" fill="#B03020"/><rect x="409" y="423" width="1" height="1" fill="#40C840"/><rect x="424" y="264" width="1" height="1" fill="#C03828"/><rect x="408" y="296" width="1" height="1" fill="#A02818"/><rect x="450" y="308" width="1" height="1" fill="#58D048"/><rect x="406" y="323" width="1" height="1" fill="#C03828"/><rect x="417" y="323" width="1" height="1" fill="#A0D040"/><rect x="388" y="326" width="1" height="1" fill="#C03828"/><rect x="409" y="402" width="1" height="1" fill="#B03020"/><rect x="410" y="368" width="1" height="1" fill="#B03020"/><rect x="389" y="320" width="1" height="1" fill="#A0D040"/><rect x="424" y="369" width="1" height="1" fill="#A02818"/><rect x="396" y="355" width="1" height="1" fill="#40C840"/><rect x="434" y="301" width="1" height="1" fill="#58D048"/><rect x="420" y="319" width="1" height="1" fill="#70D058"/><rect x="424" y="373" width="1" height="1" fill="#38B838"/><rect x="413" y="330" width="1" height="1" fill="#90C838"/><rect x="411" y="155" width="1" height="1" fill="#A02818"/><rect x="399" y="360" width="1" height="1" fill="#40C840"/><rect x="415" y="236" width="1" height="1" fill="#C03828"/><rect x="414" y="509" width="1" height="1" fill="#C84030"/><rect x="409" y="340" width="1" height="1" fill="#C03828"/><rect x="421" y="321" width="1" height="1" fill="#C84030"/><rect x="409" y="217" width="1" height="1" fill="#C84030"/><rect x="413" y="325" width="1" height="1" fill="#38B838"/><rect x="403" y="438" width="1" height="1" fill="#C84030"/><rect x="391" y="362" width="1" height="1" fill="#40C840"/><rect x="414" y="323" width="1" height="1" fill="#90C838"/><rect x="417" y="238" width="1" height="1" fill="#A02818"/><rect x="428" y="511" width="1" height="1" fill="#B03020"/><rect x="428" y="332" width="1" height="1" fill="#38B838"/><rect x="420" y="168" width="1" height="1" fill="#B03020"/><rect x="415" y="247" width="1" height="1" fill="#70D058"/><rect x="417" y="498" width="1" height="1" fill="#A02818"/><rect x="434" y="340" width="1" height="1" fill="#58D048"/><rect x="404" y="323" width="1" height="1" fill="#58D048"/><rect x="421" y="323" width="1" height="1" fill="#58D048"/><rect x="417" y="338" width="1" height="1" fill="#40C840"/><rect x="413" y="388" width="1" height="1" fill="#C03828"/><rect x="384" y="333" width="1" height="1" fill="#A02818"/><rect x="418" y="152" width="1" height="1" fill="#B03020"/><rect x="410" y="442" width="1" height="1" fill="#C03828"/><rect x="409" y="514" width="1" height="1" fill="#B03020"/><rect x="421" y="326" width="1" height="1" fill="#A0D040"/><rect x="418" y="507" width="1" height="1" fill="#B03020"/><rect x="416" y="389" width="1" height="1" fill="#38B838"/><rect x="376" y="317" width="1" height="1" fill="#38B838"/><rect x="419" y="324" width="1" height="1" fill="#C03828"/><rect x="420" y="368" width="1" height="1" fill="#70D058"/><rect x="410" y="272" width="1" height="1" fill="#A02818"/><rect x="408" y="371" width="1" height="1" fill="#70D058"/><rect x="405" y="364" width="1" height="1" fill="#C03828"/><rect x="415" y="428" width="1" height="1" fill="#B03020"/><rect x="410" y="324" width="1" height="1" fill="#C84030"/><rect x="414" y="375" width="1" height="1" fill="#70D058"/><rect x="422" y="255" width="1" height="1" fill="#C84030"/><rect x="415" y="278" width="1" height="1" fill="#58D048"/><rect x="410" y="154" width="1" height="1" fill="#C03828"/><rect x="396" y="321" width="1" height="1" fill="#90C838"/><rect x="414" y="322" width="1" height="1" fill="#90C838"/><rect x="416" y="188" width="1" height="1" fill="#A02818"/><rect x="408" y="376" width="1" height="1" fill="#B03020"/><rect x="399" y="367" width="1" height="1" fill="#40C840"/><rect x="411" y="205" width="1" height="1" fill="#A02818"/><rect x="391" y="316" width="1" height="1" fill="#40C840"/><rect x="411" y="333" width="1" height="1" fill="#70D058"/><rect x="423" y="299" width="1" height="1" fill="#70D058"/><rect x="417" y="283" width="1" height="1" fill="#C84030"/><rect x="399" y="313" width="1" height="1" fill="#38B838"/><rect x="421" y="357" width="1" height="1" fill="#38B838"/><rect x="417" y="263" width="1" height="1" fill="#A02818"/><rect x="419" y="330" width="1" height="1" fill="#C84030"/><rect x="421" y="286" width="1" height="1" fill="#38B838"/><rect x="408" y="330" width="1" height="1" fill="#58D048"/><rect x="398" y="316" width="1" height="1" fill="#70D058"/><rect x="410" y="327" width="1" height="1" fill="#70D058"/><rect x="432" y="303" width="1" height="1" fill="#38B838"/><rect x="423" y="322" width="1" height="1" fill="#A0D040"/><rect x="418" y="437" width="1" height="1" fill="#B03020"/><rect x="414" y="411" width="1" height="1" fill="#70D058"/><rect x="412" y="295" width="1" height="1" fill="#58D048"/><rect x="404" y="370" width="1" height="1" fill="#38B838"/><rect x="414" y="455" width="1" height="1" fill="#A02818"/><rect x="418" y="327" width="1" height="1" fill="#38B838"/><rect x="409" y="275" width="1" height="1" fill="#C84030"/><rect x="377" y="317" width="1" height="1" fill="#38B838"/><g transform="rotate(-4.0 414 207.5)" fill="#880000"><ellipse cx="460.30" cy="207.50" rx="6.7" ry="4.8"/><ellipse cx="460.26" cy="207.95" rx="6.7" ry="4.8"/><ellipse cx="460.12" cy="208.41" rx="6.7" ry="4.8"/><ellipse cx="459.90" cy="208.86" rx="6.7" ry="4.8"/><ellipse cx="459.60" cy="209.31" rx="6.7" ry="4.8"/><ellipse cx="459.20" cy="209.75" rx="6.7" ry="4.8"/><ellipse cx="458.72" cy="210.19" rx="6.7" ry="4.8"/><ellipse cx="458.16" cy="210.63" rx="6.7" ry="4.8"/><ellipse cx="457.51" cy="211.06" rx="6.7" ry="4.8"/><ellipse cx="456.78" cy="211.48" rx="6.7" ry="4.8"/><ellipse cx="455.96" cy="211.90" rx="6.7" ry="4.8"/><ellipse cx="455.07" cy="212.30" rx="6.7" ry="4.8"/><ellipse cx="454.10" cy="212.70" rx="6.7" ry="4.8"/><ellipse cx="453.05" cy="213.09" rx="6.7" ry="4.8"/><ellipse cx="451.93" cy="213.47" rx="6.7" ry="4.8"/><ellipse cx="450.73" cy="213.83" rx="6.7" ry="4.8"/><ellipse cx="449.47" cy="214.18" rx="6.7" ry="4.8"/><ellipse cx="448.14" cy="214.53" rx="6.7" ry="4.8"/><ellipse cx="446.74" cy="214.85" rx="6.7" ry="4.8"/><ellipse cx="445.28" cy="215.17" rx="6.7" ry="4.8"/><ellipse cx="443.76" cy="215.47" rx="6.7" ry="4.8"/><ellipse cx="442.19" cy="215.75" rx="6.7" ry="4.8"/><ellipse cx="440.56" cy="216.02" rx="6.7" ry="4.8"/><ellipse cx="438.88" cy="216.27" rx="6.7" ry="4.8"/><ellipse cx="437.15" cy="216.51" rx="6.7" ry="4.8"/><ellipse cx="435.38" cy="216.72" rx="6.7" ry="4.8"/><ellipse cx="433.57" cy="216.93" rx="6.7" ry="4.8"/><ellipse cx="431.72" cy="217.11" rx="6.7" ry="4.8"/><ellipse cx="429.84" cy="217.27" rx="6.7" ry="4.8"/><ellipse cx="427.92" cy="217.42" rx="6.7" ry="4.8"/><ellipse cx="425.98" cy="217.55" rx="6.7" ry="4.8"/><ellipse cx="424.02" cy="217.65" rx="6.7" ry="4.8"/><ellipse cx="422.04" cy="217.74" rx="6.7" ry="4.8"/><ellipse cx="420.04" cy="217.81" rx="6.7" ry="4.8"/><ellipse cx="418.04" cy="217.86" rx="6.7" ry="4.8"/><ellipse cx="416.02" cy="217.89" rx="6.7" ry="4.8"/><ellipse cx="414.00" cy="217.90" rx="6.7" ry="4.8"/><ellipse cx="411.98" cy="217.89" rx="6.7" ry="4.8"/><ellipse cx="409.96" cy="217.86" rx="6.7" ry="4.8"/><ellipse cx="407.96" cy="217.81" rx="6.7" ry="4.8"/><ellipse cx="405.96" cy="217.74" rx="6.7" ry="4.8"/><ellipse cx="403.98" cy="217.65" rx="6.7" ry="4.8"/><ellipse cx="402.02" cy="217.55" rx="6.7" ry="4.8"/><ellipse cx="400.08" cy="217.42" rx="6.7" ry="4.8"/><ellipse cx="398.16" cy="217.27" rx="6.7" ry="4.8"/><ellipse cx="396.28" cy="217.11" rx="6.7" ry="4.8"/><ellipse cx="394.43" cy="216.93" rx="6.7" ry="4.8"/><ellipse cx="392.62" cy="216.72" rx="6.7" ry="4.8"/><ellipse cx="390.85" cy="216.51" rx="6.7" ry="4.8"/><ellipse cx="389.12" cy="216.27" rx="6.7" ry="4.8"/><ellipse cx="387.44" cy="216.02" rx="6.7" ry="4.8"/><ellipse cx="385.81" cy="215.75" rx="6.7" ry="4.8"/><ellipse cx="384.24" cy="215.47" rx="6.7" ry="4.8"/><ellipse cx="382.72" cy="215.17" rx="6.7" ry="4.8"/><ellipse cx="381.26" cy="214.85" rx="6.7" ry="4.8"/><ellipse cx="379.86" cy="214.53" rx="6.7" ry="4.8"/><ellipse cx="378.53" cy="214.18" rx="6.7" ry="4.8"/><ellipse cx="377.27" cy="213.83" rx="6.7" ry="4.8"/><ellipse cx="376.07" cy="213.47" rx="6.7" ry="4.8"/><ellipse cx="374.95" cy="213.09" rx="6.7" ry="4.8"/><ellipse cx="373.90" cy="212.70" rx="6.7" ry="4.8"/><ellipse cx="372.93" cy="212.30" rx="6.7" ry="4.8"/><ellipse cx="372.04" cy="211.90" rx="6.7" ry="4.8"/><ellipse cx="371.22" cy="211.48" rx="6.7" ry="4.8"/><ellipse cx="370.49" cy="211.06" rx="6.7" ry="4.8"/><ellipse cx="369.84" cy="210.63" rx="6.7" ry="4.8"/><ellipse cx="369.28" cy="210.19" rx="6.7" ry="4.8"/><ellipse cx="368.80" cy="209.75" rx="6.7" ry="4.8"/><ellipse cx="368.40" cy="209.31" rx="6.7" ry="4.8"/><ellipse cx="368.10" cy="208.86" rx="6.7" ry="4.8"/><ellipse cx="367.88" cy="208.41" rx="6.7" ry="4.8"/><ellipse cx="367.74" cy="207.95" rx="6.7" ry="4.8"/><ellipse cx="367.70" cy="207.50" rx="6.7" ry="4.8"/><ellipse cx="367.74" cy="207.05" rx="6.7" ry="4.8"/><ellipse cx="367.88" cy="206.59" rx="6.7" ry="4.8"/><ellipse cx="368.10" cy="206.14" rx="6.7" ry="4.8"/><ellipse cx="368.40" cy="205.69" rx="6.7" ry="4.8"/><ellipse cx="368.80" cy="205.25" rx="6.7" ry="4.8"/><ellipse cx="369.28" cy="204.81" rx="6.7" ry="4.8"/><ellipse cx="369.84" cy="204.37" rx="6.7" ry="4.8"/><ellipse cx="370.49" cy="203.94" rx="6.7" ry="4.8"/><ellipse cx="371.22" cy="203.52" rx="6.7" ry="4.8"/><ellipse cx="372.04" cy="203.10" rx="6.7" ry="4.8"/><ellipse cx="372.93" cy="202.70" rx="6.7" ry="4.8"/><ellipse cx="373.90" cy="202.30" rx="6.7" ry="4.8"/><ellipse cx="374.95" cy="201.91" rx="6.7" ry="4.8"/><ellipse cx="376.07" cy="201.53" rx="6.7" ry="4.8"/><ellipse cx="377.27" cy="201.17" rx="6.7" ry="4.8"/><ellipse cx="378.53" cy="200.82" rx="6.7" ry="4.8"/><ellipse cx="379.86" cy="200.47" rx="6.7" ry="4.8"/><ellipse cx="381.26" cy="200.15" rx="6.7" ry="4.8"/><ellipse cx="382.72" cy="199.83" rx="6.7" ry="4.8"/><ellipse cx="384.24" cy="199.53" rx="6.7" ry="4.8"/><ellipse cx="385.81" cy="199.25" rx="6.7" ry="4.8"/><ellipse cx="387.44" cy="198.98" rx="6.7" ry="4.8"/><ellipse cx="389.12" cy="198.73" rx="6.7" ry="4.8"/><ellipse cx="390.85" cy="198.49" rx="6.7" ry="4.8"/><ellipse cx="392.62" cy="198.28" rx="6.7" ry="4.8"/><ellipse cx="394.43" cy="198.07" rx="6.7" ry="4.8"/><ellipse cx="396.28" cy="197.89" rx="6.7" ry="4.8"/><ellipse cx="398.16" cy="197.73" rx="6.7" ry="4.8"/><ellipse cx="400.08" cy="197.58" rx="6.7" ry="4.8"/><ellipse cx="402.02" cy="197.45" rx="6.7" ry="4.8"/><ellipse cx="403.98" cy="197.35" rx="6.7" ry="4.8"/><ellipse cx="405.96" cy="197.26" rx="6.7" ry="4.8"/><ellipse cx="407.96" cy="197.19" rx="6.7" ry="4.8"/><ellipse cx="409.96" cy="197.14" rx="6.7" ry="4.8"/><ellipse cx="411.98" cy="197.11" rx="6.7" ry="4.8"/><ellipse cx="414.00" cy="197.10" rx="6.7" ry="4.8"/><ellipse cx="416.02" cy="197.11" rx="6.7" ry="4.8"/><ellipse cx="418.04" cy="197.14" rx="6.7" ry="4.8"/><ellipse cx="420.04" cy="197.19" rx="6.7" ry="4.8"/><ellipse cx="422.04" cy="197.26" rx="6.7" ry="4.8"/><ellipse cx="424.02" cy="197.35" rx="6.7" ry="4.8"/><ellipse cx="425.98" cy="197.45" rx="6.7" ry="4.8"/><ellipse cx="427.92" cy="197.58" rx="6.7" ry="4.8"/><ellipse cx="429.84" cy="197.73" rx="6.7" ry="4.8"/><ellipse cx="431.72" cy="197.89" rx="6.7" ry="4.8"/><ellipse cx="433.57" cy="198.07" rx="6.7" ry="4.8"/><ellipse cx="435.38" cy="198.28" rx="6.7" ry="4.8"/><ellipse cx="437.15" cy="198.49" rx="6.7" ry="4.8"/><ellipse cx="438.88" cy="198.73" rx="6.7" ry="4.8"/><ellipse cx="440.56" cy="198.98" rx="6.7" ry="4.8"/><ellipse cx="442.19" cy="199.25" rx="6.7" ry="4.8"/><ellipse cx="443.76" cy="199.53" rx="6.7" ry="4.8"/><ellipse cx="445.28" cy="199.83" rx="6.7" ry="4.8"/><ellipse cx="446.74" cy="200.15" rx="6.7" ry="4.8"/><ellipse cx="448.14" cy="200.47" rx="6.7" ry="4.8"/><ellipse cx="449.47" cy="200.82" rx="6.7" ry="4.8"/><ellipse cx="450.73" cy="201.17" rx="6.7" ry="4.8"/><ellipse cx="451.93" cy="201.53" rx="6.7" ry="4.8"/><ellipse cx="453.05" cy="201.91" rx="6.7" ry="4.8"/><ellipse cx="454.10" cy="202.30" rx="6.7" ry="4.8"/><ellipse cx="455.07" cy="202.70" rx="6.7" ry="4.8"/><ellipse cx="455.96" cy="203.10" rx="6.7" ry="4.8"/><ellipse cx="456.78" cy="203.52" rx="6.7" ry="4.8"/><ellipse cx="457.51" cy="203.94" rx="6.7" ry="4.8"/><ellipse cx="458.16" cy="204.37" rx="6.7" ry="4.8"/><ellipse cx="458.72" cy="204.81" rx="6.7" ry="4.8"/><ellipse cx="459.20" cy="205.25" rx="6.7" ry="4.8"/><ellipse cx="459.60" cy="205.69" rx="6.7" ry="4.8"/><ellipse cx="459.90" cy="206.14" rx="6.7" ry="4.8"/><ellipse cx="460.12" cy="206.59" rx="6.7" ry="4.8"/><ellipse cx="460.26" cy="207.05" rx="6.7" ry="4.8"/></g><g transform="rotate(-4.0 414 455.5)" fill="#880000"><ellipse cx="460.30" cy="455.50" rx="6.7" ry="4.8"/><ellipse cx="460.26" cy="455.95" rx="6.7" ry="4.8"/><ellipse cx="460.12" cy="456.41" rx="6.7" ry="4.8"/><ellipse cx="459.90" cy="456.86" rx="6.7" ry="4.8"/><ellipse cx="459.60" cy="457.31" rx="6.7" ry="4.8"/><ellipse cx="459.20" cy="457.75" rx="6.7" ry="4.8"/><ellipse cx="458.72" cy="458.19" rx="6.7" ry="4.8"/><ellipse cx="458.16" cy="458.63" rx="6.7" ry="4.8"/><ellipse cx="457.51" cy="459.06" rx="6.7" ry="4.8"/><ellipse cx="456.78" cy="459.48" rx="6.7" ry="4.8"/><ellipse cx="455.96" cy="459.90" rx="6.7" ry="4.8"/><ellipse cx="455.07" cy="460.30" rx="6.7" ry="4.8"/><ellipse cx="454.10" cy="460.70" rx="6.7" ry="4.8"/><ellipse cx="453.05" cy="461.09" rx="6.7" ry="4.8"/><ellipse cx="451.93" cy="461.47" rx="6.7" ry="4.8"/><ellipse cx="450.73" cy="461.83" rx="6.7" ry="4.8"/><ellipse cx="449.47" cy="462.18" rx="6.7" ry="4.8"/><ellipse cx="448.14" cy="462.53" rx="6.7" ry="4.8"/><ellipse cx="446.74" cy="462.85" rx="6.7" ry="4.8"/><ellipse cx="445.28" cy="463.17" rx="6.7" ry="4.8"/><ellipse cx="443.76" cy="463.47" rx="6.7" ry="4.8"/><ellipse cx="442.19" cy="463.75" rx="6.7" ry="4.8"/><ellipse cx="440.56" cy="464.02" rx="6.7" ry="4.8"/><ellipse cx="438.88" cy="464.27" rx="6.7" ry="4.8"/><ellipse cx="437.15" cy="464.51" rx="6.7" ry="4.8"/><ellipse cx="435.38" cy="464.72" rx="6.7" ry="4.8"/><ellipse cx="433.57" cy="464.93" rx="6.7" ry="4.8"/><ellipse cx="431.72" cy="465.11" rx="6.7" ry="4.8"/><ellipse cx="429.84" cy="465.27" rx="6.7" ry="4.8"/><ellipse cx="427.92" cy="465.42" rx="6.7" ry="4.8"/><ellipse cx="425.98" cy="465.55" rx="6.7" ry="4.8"/><ellipse cx="424.02" cy="465.65" rx="6.7" ry="4.8"/><ellipse cx="422.04" cy="465.74" rx="6.7" ry="4.8"/><ellipse cx="420.04" cy="465.81" rx="6.7" ry="4.8"/><ellipse cx="418.04" cy="465.86" rx="6.7" ry="4.8"/><ellipse cx="416.02" cy="465.89" rx="6.7" ry="4.8"/><ellipse cx="414.00" cy="465.90" rx="6.7" ry="4.8"/><ellipse cx="411.98" cy="465.89" rx="6.7" ry="4.8"/><ellipse cx="409.96" cy="465.86" rx="6.7" ry="4.8"/><ellipse cx="407.96" cy="465.81" rx="6.7" ry="4.8"/><ellipse cx="405.96" cy="465.74" rx="6.7" ry="4.8"/><ellipse cx="403.98" cy="465.65" rx="6.7" ry="4.8"/><ellipse cx="402.02" cy="465.55" rx="6.7" ry="4.8"/><ellipse cx="400.08" cy="465.42" rx="6.7" ry="4.8"/><ellipse cx="398.16" cy="465.27" rx="6.7" ry="4.8"/><ellipse cx="396.28" cy="465.11" rx="6.7" ry="4.8"/><ellipse cx="394.43" cy="464.93" rx="6.7" ry="4.8"/><ellipse cx="392.62" cy="464.72" rx="6.7" ry="4.8"/><ellipse cx="390.85" cy="464.51" rx="6.7" ry="4.8"/><ellipse cx="389.12" cy="464.27" rx="6.7" ry="4.8"/><ellipse cx="387.44" cy="464.02" rx="6.7" ry="4.8"/><ellipse cx="385.81" cy="463.75" rx="6.7" ry="4.8"/><ellipse cx="384.24" cy="463.47" rx="6.7" ry="4.8"/><ellipse cx="382.72" cy="463.17" rx="6.7" ry="4.8"/><ellipse cx="381.26" cy="462.85" rx="6.7" ry="4.8"/><ellipse cx="379.86" cy="462.53" rx="6.7" ry="4.8"/><ellipse cx="378.53" cy="462.18" rx="6.7" ry="4.8"/><ellipse cx="377.27" cy="461.83" rx="6.7" ry="4.8"/><ellipse cx="376.07" cy="461.47" rx="6.7" ry="4.8"/><ellipse cx="374.95" cy="461.09" rx="6.7" ry="4.8"/><ellipse cx="373.90" cy="460.70" rx="6.7" ry="4.8"/><ellipse cx="372.93" cy="460.30" rx="6.7" ry="4.8"/><ellipse cx="372.04" cy="459.90" rx="6.7" ry="4.8"/><ellipse cx="371.22" cy="459.48" rx="6.7" ry="4.8"/><ellipse cx="370.49" cy="459.06" rx="6.7" ry="4.8"/><ellipse cx="369.84" cy="458.63" rx="6.7" ry="4.8"/><ellipse cx="369.28" cy="458.19" rx="6.7" ry="4.8"/><ellipse cx="368.80" cy="457.75" rx="6.7" ry="4.8"/><ellipse cx="368.40" cy="457.31" rx="6.7" ry="4.8"/><ellipse cx="368.10" cy="456.86" rx="6.7" ry="4.8"/><ellipse cx="367.88" cy="456.41" rx="6.7" ry="4.8"/><ellipse cx="367.74" cy="455.95" rx="6.7" ry="4.8"/><ellipse cx="367.70" cy="455.50" rx="6.7" ry="4.8"/><ellipse cx="367.74" cy="455.05" rx="6.7" ry="4.8"/><ellipse cx="367.88" cy="454.59" rx="6.7" ry="4.8"/><ellipse cx="368.10" cy="454.14" rx="6.7" ry="4.8"/><ellipse cx="368.40" cy="453.69" rx="6.7" ry="4.8"/><ellipse cx="368.80" cy="453.25" rx="6.7" ry="4.8"/><ellipse cx="369.28" cy="452.81" rx="6.7" ry="4.8"/><ellipse cx="369.84" cy="452.37" rx="6.7" ry="4.8"/><ellipse cx="370.49" cy="451.94" rx="6.7" ry="4.8"/><ellipse cx="371.22" cy="451.52" rx="6.7" ry="4.8"/><ellipse cx="372.04" cy="451.10" rx="6.7" ry="4.8"/><ellipse cx="372.93" cy="450.70" rx="6.7" ry="4.8"/><ellipse cx="373.90" cy="450.30" rx="6.7" ry="4.8"/><ellipse cx="374.95" cy="449.91" rx="6.7" ry="4.8"/><ellipse cx="376.07" cy="449.53" rx="6.7" ry="4.8"/><ellipse cx="377.27" cy="449.17" rx="6.7" ry="4.8"/><ellipse cx="378.53" cy="448.82" rx="6.7" ry="4.8"/><ellipse cx="379.86" cy="448.47" rx="6.7" ry="4.8"/><ellipse cx="381.26" cy="448.15" rx="6.7" ry="4.8"/><ellipse cx="382.72" cy="447.83" rx="6.7" ry="4.8"/><ellipse cx="384.24" cy="447.53" rx="6.7" ry="4.8"/><ellipse cx="385.81" cy="447.25" rx="6.7" ry="4.8"/><ellipse cx="387.44" cy="446.98" rx="6.7" ry="4.8"/><ellipse cx="389.12" cy="446.73" rx="6.7" ry="4.8"/><ellipse cx="390.85" cy="446.49" rx="6.7" ry="4.8"/><ellipse cx="392.62" cy="446.28" rx="6.7" ry="4.8"/><ellipse cx="394.43" cy="446.07" rx="6.7" ry="4.8"/><ellipse cx="396.28" cy="445.89" rx="6.7" ry="4.8"/><ellipse cx="398.16" cy="445.73" rx="6.7" ry="4.8"/><ellipse cx="400.08" cy="445.58" rx="6.7" ry="4.8"/><ellipse cx="402.02" cy="445.45" rx="6.7" ry="4.8"/><ellipse cx="403.98" cy="445.35" rx="6.7" ry="4.8"/><ellipse cx="405.96" cy="445.26" rx="6.7" ry="4.8"/><ellipse cx="407.96" cy="445.19" rx="6.7" ry="4.8"/><ellipse cx="409.96" cy="445.14" rx="6.7" ry="4.8"/><ellipse cx="411.98" cy="445.11" rx="6.7" ry="4.8"/><ellipse cx="414.00" cy="445.10" rx="6.7" ry="4.8"/><ellipse cx="416.02" cy="445.11" rx="6.7" ry="4.8"/><ellipse cx="418.04" cy="445.14" rx="6.7" ry="4.8"/><ellipse cx="420.04" cy="445.19" rx="6.7" ry="4.8"/><ellipse cx="422.04" cy="445.26" rx="6.7" ry="4.8"/><ellipse cx="424.02" cy="445.35" rx="6.7" ry="4.8"/><ellipse cx="425.98" cy="445.45" rx="6.7" ry="4.8"/><ellipse cx="427.92" cy="445.58" rx="6.7" ry="4.8"/><ellipse cx="429.84" cy="445.73" rx="6.7" ry="4.8"/><ellipse cx="431.72" cy="445.89" rx="6.7" ry="4.8"/><ellipse cx="433.57" cy="446.07" rx="6.7" ry="4.8"/><ellipse cx="435.38" cy="446.28" rx="6.7" ry="4.8"/><ellipse cx="437.15" cy="446.49" rx="6.7" ry="4.8"/><ellipse cx="438.88" cy="446.73" rx="6.7" ry="4.8"/><ellipse cx="440.56" cy="446.98" rx="6.7" ry="4.8"/><ellipse cx="442.19" cy="447.25" rx="6.7" ry="4.8"/><ellipse cx="443.76" cy="447.53" rx="6.7" ry="4.8"/><ellipse cx="445.28" cy="447.83" rx="6.7" ry="4.8"/><ellipse cx="446.74" cy="448.15" rx="6.7" ry="4.8"/><ellipse cx="448.14" cy="448.47" rx="6.7" ry="4.8"/><ellipse cx="449.47" cy="448.82" rx="6.7" ry="4.8"/><ellipse cx="450.73" cy="449.17" rx="6.7" ry="4.8"/><ellipse cx="451.93" cy="449.53" rx="6.7" ry="4.8"/><ellipse cx="453.05" cy="449.91" rx="6.7" ry="4.8"/><ellipse cx="454.10" cy="450.30" rx="6.7" ry="4.8"/><ellipse cx="455.07" cy="450.70" rx="6.7" ry="4.8"/><ellipse cx="455.96" cy="451.10" rx="6.7" ry="4.8"/><ellipse cx="456.78" cy="451.52" rx="6.7" ry="4.8"/><ellipse cx="457.51" cy="451.94" rx="6.7" ry="4.8"/><ellipse cx="458.16" cy="452.37" rx="6.7" ry="4.8"/><ellipse cx="458.72" cy="452.81" rx="6.7" ry="4.8"/><ellipse cx="459.20" cy="453.25" rx="6.7" ry="4.8"/><ellipse cx="459.60" cy="453.69" rx="6.7" ry="4.8"/><ellipse cx="459.90" cy="454.14" rx="6.7" ry="4.8"/><ellipse cx="460.12" cy="454.59" rx="6.7" ry="4.8"/><ellipse cx="460.26" cy="455.05" rx="6.7" ry="4.8"/></g><g transform="rotate(-4.8 414 331.2)" fill="#0000F8"><ellipse cx="505.40" cy="331.20" rx="5.0" ry="5.2"/><ellipse cx="505.36" cy="331.75" rx="5.0" ry="5.2"/><ellipse cx="505.25" cy="332.30" rx="5.0" ry="5.2"/><ellipse cx="505.06" cy="332.85" rx="5.0" ry="5.2"/><ellipse cx="504.80" cy="333.40" rx="5.0" ry="5.2"/><ellipse cx="504.47" cy="333.95" rx="5.0" ry="5.2"/><ellipse cx="504.06" cy="334.49" rx="5.0" ry="5.2"/><ellipse cx="503.58" cy="335.03" rx="5.0" ry="5.2"/><ellipse cx="503.02" cy="335.57" rx="5.0" ry="5.2"/><ellipse cx="502.40" cy="336.11" rx="5.0" ry="5.2"/><ellipse cx="501.70" cy="336.64" rx="5.0" ry="5.2"/><ellipse cx="500.93" cy="337.16" rx="5.0" ry="5.2"/><ellipse cx="500.08" cy="337.69" rx="5.0" ry="5.2"/><ellipse cx="499.17" cy="338.20" rx="5.0" ry="5.2"/><ellipse cx="498.19" cy="338.71" rx="5.0" ry="5.2"/><ellipse cx="497.14" cy="339.22" rx="5.0" ry="5.2"/><ellipse cx="496.02" cy="339.72" rx="5.0" ry="5.2"/><ellipse cx="494.84" cy="340.21" rx="5.0" ry="5.2"/><ellipse cx="493.59" cy="340.69" rx="5.0" ry="5.2"/><ellipse cx="492.27" cy="341.17" rx="5.0" ry="5.2"/><ellipse cx="490.89" cy="341.63" rx="5.0" ry="5.2"/><ellipse cx="489.45" cy="342.09" rx="5.0" ry="5.2"/><ellipse cx="487.94" cy="342.54" rx="5.0" ry="5.2"/><ellipse cx="486.38" cy="342.99" rx="5.0" ry="5.2"/><ellipse cx="484.76" cy="343.42" rx="5.0" ry="5.2"/><ellipse cx="483.08" cy="343.84" rx="5.0" ry="5.2"/><ellipse cx="481.34" cy="344.25" rx="5.0" ry="5.2"/><ellipse cx="479.55" cy="344.65" rx="5.0" ry="5.2"/><ellipse cx="477.70" cy="345.04" rx="5.0" ry="5.2"/><ellipse cx="475.80" cy="345.42" rx="5.0" ry="5.2"/><ellipse cx="473.85" cy="345.79" rx="5.0" ry="5.2"/><ellipse cx="471.86" cy="346.14" rx="5.0" ry="5.2"/><ellipse cx="469.81" cy="346.48" rx="5.0" ry="5.2"/><ellipse cx="467.72" cy="346.81" rx="5.0" ry="5.2"/><ellipse cx="465.59" cy="347.13" rx="5.0" ry="5.2"/><ellipse cx="463.41" cy="347.44" rx="5.0" ry="5.2"/><ellipse cx="461.20" cy="347.73" rx="5.0" ry="5.2"/><ellipse cx="458.94" cy="348.01" rx="5.0" ry="5.2"/><ellipse cx="456.65" cy="348.27" rx="5.0" ry="5.2"/><ellipse cx="454.33" cy="348.52" rx="5.0" ry="5.2"/><ellipse cx="451.97" cy="348.76" rx="5.0" ry="5.2"/><ellipse cx="449.58" cy="348.98" rx="5.0" ry="5.2"/><ellipse cx="447.16" cy="349.18" rx="5.0" ry="5.2"/><ellipse cx="444.71" cy="349.38" rx="5.0" ry="5.2"/><ellipse cx="442.24" cy="349.56" rx="5.0" ry="5.2"/><ellipse cx="439.75" cy="349.72" rx="5.0" ry="5.2"/><ellipse cx="437.24" cy="349.87" rx="5.0" ry="5.2"/><ellipse cx="434.70" cy="350.00" rx="5.0" ry="5.2"/><ellipse cx="432.15" cy="350.12" rx="5.0" ry="5.2"/><ellipse cx="429.59" cy="350.22" rx="5.0" ry="5.2"/><ellipse cx="427.01" cy="350.30" rx="5.0" ry="5.2"/><ellipse cx="424.42" cy="350.37" rx="5.0" ry="5.2"/><ellipse cx="421.82" cy="350.43" rx="5.0" ry="5.2"/><ellipse cx="419.22" cy="350.47" rx="5.0" ry="5.2"/><ellipse cx="416.61" cy="350.49" rx="5.0" ry="5.2"/><ellipse cx="414.00" cy="350.50" rx="5.0" ry="5.2"/><ellipse cx="411.39" cy="350.49" rx="5.0" ry="5.2"/><ellipse cx="408.78" cy="350.47" rx="5.0" ry="5.2"/><ellipse cx="406.18" cy="350.43" rx="5.0" ry="5.2"/><ellipse cx="403.58" cy="350.37" rx="5.0" ry="5.2"/><ellipse cx="400.99" cy="350.30" rx="5.0" ry="5.2"/><ellipse cx="398.41" cy="350.22" rx="5.0" ry="5.2"/><ellipse cx="395.85" cy="350.12" rx="5.0" ry="5.2"/><ellipse cx="393.30" cy="350.00" rx="5.0" ry="5.2"/><ellipse cx="390.76" cy="349.87" rx="5.0" ry="5.2"/><ellipse cx="388.25" cy="349.72" rx="5.0" ry="5.2"/><ellipse cx="385.76" cy="349.56" rx="5.0" ry="5.2"/><ellipse cx="383.29" cy="349.38" rx="5.0" ry="5.2"/><ellipse cx="380.84" cy="349.18" rx="5.0" ry="5.2"/><ellipse cx="378.42" cy="348.98" rx="5.0" ry="5.2"/><ellipse cx="376.03" cy="348.76" rx="5.0" ry="5.2"/><ellipse cx="373.67" cy="348.52" rx="5.0" ry="5.2"/><ellipse cx="371.35" cy="348.27" rx="5.0" ry="5.2"/><ellipse cx="369.06" cy="348.01" rx="5.0" ry="5.2"/><ellipse cx="366.80" cy="347.73" rx="5.0" ry="5.2"/><ellipse cx="364.59" cy="347.44" rx="5.0" ry="5.2"/><ellipse cx="362.41" cy="347.13" rx="5.0" ry="5.2"/><ellipse cx="360.28" cy="346.81" rx="5.0" ry="5.2"/><ellipse cx="358.19" cy="346.48" rx="5.0" ry="5.2"/><ellipse cx="356.14" cy="346.14" rx="5.0" ry="5.2"/><ellipse cx="354.15" cy="345.79" rx="5.0" ry="5.2"/><ellipse cx="352.20" cy="345.42" rx="5.0" ry="5.2"/><ellipse cx="350.30" cy="345.04" rx="5.0" ry="5.2"/><ellipse cx="348.45" cy="344.65" rx="5.0" ry="5.2"/><ellipse cx="346.66" cy="344.25" rx="5.0" ry="5.2"/><ellipse cx="344.92" cy="343.84" rx="5.0" ry="5.2"/><ellipse cx="343.24" cy="343.42" rx="5.0" ry="5.2"/><ellipse cx="341.62" cy="342.99" rx="5.0" ry="5.2"/><ellipse cx="340.06" cy="342.54" rx="5.0" ry="5.2"/><ellipse cx="338.55" cy="342.09" rx="5.0" ry="5.2"/><ellipse cx="337.11" cy="341.63" rx="5.0" ry="5.2"/><ellipse cx="335.73" cy="341.17" rx="5.0" ry="5.2"/><ellipse cx="334.41" cy="340.69" rx="5.0" ry="5.2"/><ellipse cx="333.16" cy="340.21" rx="5.0" ry="5.2"/><ellipse cx="331.98" cy="339.72" rx="5.0" ry="5.2"/><ellipse cx="330.86" cy="339.22" rx="5.0" ry="5.2"/><ellipse cx="329.81" cy="338.71" rx="5.0" ry="5.2"/><ellipse cx="328.83" cy="338.20" rx="5.0" ry="5.2"/><ellipse cx="327.92" cy="337.69" rx="5.0" ry="5.2"/><ellipse cx="327.07" cy="337.16" rx="5.0" ry="5.2"/><ellipse cx="326.30" cy="336.64" rx="5.0" ry="5.2"/><ellipse cx="325.60" cy="336.11" rx="5.0" ry="5.2"/><ellipse cx="324.98" cy="335.57" rx="5.0" ry="5.2"/><ellipse cx="324.42" cy="335.03" rx="5.0" ry="5.2"/><ellipse cx="323.94" cy="334.49" rx="5.0" ry="5.2"/><ellipse cx="323.53" cy="333.95" rx="5.0" ry="5.2"/><ellipse cx="323.20" cy="333.40" rx="5.0" ry="5.2"/><ellipse cx="322.94" cy="332.85" rx="5.0" ry="5.2"/><ellipse cx="322.75" cy="332.30" rx="5.0" ry="5.2"/><ellipse cx="322.64" cy="331.75" rx="5.0" ry="5.2"/><ellipse cx="322.60" cy="331.20" rx="5.0" ry="5.2"/><ellipse cx="322.64" cy="330.65" rx="5.0" ry="5.2"/><ellipse cx="322.75" cy="330.10" rx="5.0" ry="5.2"/><ellipse cx="322.94" cy="329.55" rx="5.0" ry="5.2"/><ellipse cx="323.20" cy="329.00" rx="5.0" ry="5.2"/><ellipse cx="323.53" cy="328.45" rx="5.0" ry="5.2"/><ellipse cx="323.94" cy="327.91" rx="5.0" ry="5.2"/><ellipse cx="324.42" cy="327.37" rx="5.0" ry="5.2"/><ellipse cx="324.98" cy="326.83" rx="5.0" ry="5.2"/><ellipse cx="325.60" cy="326.29" rx="5.0" ry="5.2"/><ellipse cx="326.30" cy="325.76" rx="5.0" ry="5.2"/><ellipse cx="327.07" cy="325.24" rx="5.0" ry="5.2"/><ellipse cx="327.92" cy="324.71" rx="5.0" ry="5.2"/><ellipse cx="328.83" cy="324.20" rx="5.0" ry="5.2"/><ellipse cx="329.81" cy="323.69" rx="5.0" ry="5.2"/><ellipse cx="330.86" cy="323.18" rx="5.0" ry="5.2"/><ellipse cx="331.98" cy="322.68" rx="5.0" ry="5.2"/><ellipse cx="333.16" cy="322.19" rx="5.0" ry="5.2"/><ellipse cx="334.41" cy="321.71" rx="5.0" ry="5.2"/><ellipse cx="335.73" cy="321.23" rx="5.0" ry="5.2"/><ellipse cx="337.11" cy="320.77" rx="5.0" ry="5.2"/><ellipse cx="338.55" cy="320.31" rx="5.0" ry="5.2"/><ellipse cx="340.06" cy="319.86" rx="5.0" ry="5.2"/><ellipse cx="341.62" cy="319.41" rx="5.0" ry="5.2"/><ellipse cx="343.24" cy="318.98" rx="5.0" ry="5.2"/><ellipse cx="344.92" cy="318.56" rx="5.0" ry="5.2"/><ellipse cx="346.66" cy="318.15" rx="5.0" ry="5.2"/><ellipse cx="348.45" cy="317.75" rx="5.0" ry="5.2"/><ellipse cx="350.30" cy="317.36" rx="5.0" ry="5.2"/><ellipse cx="352.20" cy="316.98" rx="5.0" ry="5.2"/><ellipse cx="354.15" cy="316.61" rx="5.0" ry="5.2"/><ellipse cx="356.14" cy="316.26" rx="5.0" ry="5.2"/><ellipse cx="358.19" cy="315.92" rx="5.0" ry="5.2"/><ellipse cx="360.28" cy="315.59" rx="5.0" ry="5.2"/><ellipse cx="362.41" cy="315.27" rx="5.0" ry="5.2"/><ellipse cx="364.59" cy="314.96" rx="5.0" ry="5.2"/><ellipse cx="366.80" cy="314.67" rx="5.0" ry="5.2"/><ellipse cx="369.06" cy="314.39" rx="5.0" ry="5.2"/><ellipse cx="371.35" cy="314.13" rx="5.0" ry="5.2"/><ellipse cx="373.67" cy="313.88" rx="5.0" ry="5.2"/><ellipse cx="376.03" cy="313.64" rx="5.0" ry="5.2"/><ellipse cx="378.42" cy="313.42" rx="5.0" ry="5.2"/><ellipse cx="380.84" cy="313.22" rx="5.0" ry="5.2"/><ellipse cx="383.29" cy="313.02" rx="5.0" ry="5.2"/><ellipse cx="385.76" cy="312.84" rx="5.0" ry="5.2"/><ellipse cx="388.25" cy="312.68" rx="5.0" ry="5.2"/><ellipse cx="390.76" cy="312.53" rx="5.0" ry="5.2"/><ellipse cx="393.30" cy="312.40" rx="5.0" ry="5.2"/><ellipse cx="395.85" cy="312.28" rx="5.0" ry="5.2"/><ellipse cx="398.41" cy="312.18" rx="5.0" ry="5.2"/><ellipse cx="400.99" cy="312.10" rx="5.0" ry="5.2"/><ellipse cx="403.58" cy="312.03" rx="5.0" ry="5.2"/><ellipse cx="406.18" cy="311.97" rx="5.0" ry="5.2"/><ellipse cx="408.78" cy="311.93" rx="5.0" ry="5.2"/><ellipse cx="411.39" cy="311.91" rx="5.0" ry="5.2"/><ellipse cx="414.00" cy="311.90" rx="5.0" ry="5.2"/><ellipse cx="416.61" cy="311.91" rx="5.0" ry="5.2"/><ellipse cx="419.22" cy="311.93" rx="5.0" ry="5.2"/><ellipse cx="421.82" cy="311.97" rx="5.0" ry="5.2"/><ellipse cx="424.42" cy="312.03" rx="5.0" ry="5.2"/><ellipse cx="427.01" cy="312.10" rx="5.0" ry="5.2"/><ellipse cx="429.59" cy="312.18" rx="5.0" ry="5.2"/><ellipse cx="432.15" cy="312.28" rx="5.0" ry="5.2"/><ellipse cx="434.70" cy="312.40" rx="5.0" ry="5.2"/><ellipse cx="437.24" cy="312.53" rx="5.0" ry="5.2"/><ellipse cx="439.75" cy="312.68" rx="5.0" ry="5.2"/><ellipse cx="442.24" cy="312.84" rx="5.0" ry="5.2"/><ellipse cx="444.71" cy="313.02" rx="5.0" ry="5.2"/><ellipse cx="447.16" cy="313.22" rx="5.0" ry="5.2"/><ellipse cx="449.58" cy="313.42" rx="5.0" ry="5.2"/><ellipse cx="451.97" cy="313.64" rx="5.0" ry="5.2"/><ellipse cx="454.33" cy="313.88" rx="5.0" ry="5.2"/><ellipse cx="456.65" cy="314.13" rx="5.0" ry="5.2"/><ellipse cx="458.94" cy="314.39" rx="5.0" ry="5.2"/><ellipse cx="461.20" cy="314.67" rx="5.0" ry="5.2"/><ellipse cx="463.41" cy="314.96" rx="5.0" ry="5.2"/><ellipse cx="465.59" cy="315.27" rx="5.0" ry="5.2"/><ellipse cx="467.72" cy="315.59" rx="5.0" ry="5.2"/><ellipse cx="469.81" cy="315.92" rx="5.0" ry="5.2"/><ellipse cx="471.86" cy="316.26" rx="5.0" ry="5.2"/><ellipse cx="473.85" cy="316.61" rx="5.0" ry="5.2"/><ellipse cx="475.80" cy="316.98" rx="5.0" ry="5.2"/><ellipse cx="477.70" cy="317.36" rx="5.0" ry="5.2"/><ellipse cx="479.55" cy="317.75" rx="5.0" ry="5.2"/><ellipse cx="481.34" cy="318.15" rx="5.0" ry="5.2"/><ellipse cx="483.08" cy="318.56" rx="5.0" ry="5.2"/><ellipse cx="484.76" cy="318.98" rx="5.0" ry="5.2"/><ellipse cx="486.38" cy="319.41" rx="5.0" ry="5.2"/><ellipse cx="487.94" cy="319.86" rx="5.0" ry="5.2"/><ellipse cx="489.45" cy="320.31" rx="5.0" ry="5.2"/><ellipse cx="490.89" cy="320.77" rx="5.0" ry="5.2"/><ellipse cx="492.27" cy="321.23" rx="5.0" ry="5.2"/><ellipse cx="493.59" cy="321.71" rx="5.0" ry="5.2"/><ellipse cx="494.84" cy="322.19" rx="5.0" ry="5.2"/><ellipse cx="496.02" cy="322.68" rx="5.0" ry="5.2"/><ellipse cx="497.14" cy="323.18" rx="5.0" ry="5.2"/><ellipse cx="498.19" cy="323.69" rx="5.0" ry="5.2"/><ellipse cx="499.17" cy="324.20" rx="5.0" ry="5.2"/><ellipse cx="500.08" cy="324.71" rx="5.0" ry="5.2"/><ellipse cx="500.93" cy="325.24" rx="5.0" ry="5.2"/><ellipse cx="501.70" cy="325.76" rx="5.0" ry="5.2"/><ellipse cx="502.40" cy="326.29" rx="5.0" ry="5.2"/><ellipse cx="503.02" cy="326.83" rx="5.0" ry="5.2"/><ellipse cx="503.58" cy="327.37" rx="5.0" ry="5.2"/><ellipse cx="504.06" cy="327.91" rx="5.0" ry="5.2"/><ellipse cx="504.47" cy="328.45" rx="5.0" ry="5.2"/><ellipse cx="504.80" cy="329.00" rx="5.0" ry="5.2"/><ellipse cx="505.06" cy="329.55" rx="5.0" ry="5.2"/><ellipse cx="505.25" cy="330.10" rx="5.0" ry="5.2"/><ellipse cx="505.36" cy="330.65" rx="5.0" ry="5.2"/></g><rect x="403" y="322" width="1" height="1" fill="#38B838"/><rect x="414" y="326" width="1" height="1" fill="#90C838"/><rect x="380" y="360" width="1" height="1" fill="#40C840"/><rect x="410" y="391" width="1" height="1" fill="#58D048"/><rect x="416" y="450" width="1" height="1" fill="#A02818"/><rect x="440" y="332" width="1" height="1" fill="#70D058"/><rect x="447" y="344" width="1" height="1" fill="#38B838"/><rect x="415" y="302" width="1" height="1" fill="#C03828"/><rect x="435" y="333" width="1" height="1" fill="#40C840"/><rect x="411" y="308" width="1" height="1" fill="#70D058"/><rect x="422" y="347" width="1" height="1" fill="#38B838"/><rect x="427" y="334" width="1" height="1" fill="#40C840"/><rect x="429" y="302" width="1" height="1" fill="#C84030"/><rect x="401" y="345" width="1" height="1" fill="#58D048"/><rect x="416" y="338" width="1" height="1" fill="#40C840"/><rect x="417" y="298" width="1" height="1" fill="#A02818"/><rect x="413" y="284" width="1" height="1" fill="#A02818"/><rect x="427" y="301" width="1" height="1" fill="#40C840"/><rect x="415" y="339" width="1" height="1" fill="#58D048"/><rect x="407" y="328" width="1" height="1" fill="#B03020"/><rect x="425" y="389" width="1" height="1" fill="#C03828"/><rect x="408" y="303" width="1" height="1" fill="#58D048"/><rect x="423" y="279" width="1" height="1" fill="#C03828"/><rect x="413" y="336" width="1" height="1" fill="#A02818"/><rect x="415" y="338" width="1" height="1" fill="#70D058"/><rect x="406" y="416" width="1" height="1" fill="#C84030"/><rect x="390" y="359" width="1" height="1" fill="#C84030"/><rect x="402" y="382" width="1" height="1" fill="#70D058"/><rect x="388" y="317" width="1" height="1" fill="#70D058"/><rect x="421" y="333" width="1" height="1" fill="#70D058"/><rect x="422" y="259" width="1" height="1" fill="#A02818"/><rect x="380" y="341" width="1" height="1" fill="#40C840"/><rect x="416" y="506" width="1" height="1" fill="#C03828"/><rect x="404" y="341" width="1" height="1" fill="#38B838"/><rect x="423" y="418" width="1" height="1" fill="#40C840"/><rect x="400" y="346" width="1" height="1" fill="#38B838"/><rect x="415" y="503" width="1" height="1" fill="#A02818"/><rect x="438" y="405" width="1" height="1" fill="#58D048"/><rect x="420" y="380" width="1" height="1" fill="#58D048"/><rect x="392" y="341" width="1" height="1" fill="#C84030"/><rect x="410" y="344" width="1" height="1" fill="#70D058"/><rect x="408" y="347" width="1" height="1" fill="#70D058"/><rect x="402" y="304" width="1" height="1" fill="#58D048"/><rect x="413" y="323" width="1" height="1" fill="#38B838"/><rect x="437" y="301" width="1" height="1" fill="#C03828"/><rect x="400" y="345" width="1" height="1" fill="#B03020"/><rect x="420" y="147" width="1" height="1" fill="#B03020"/><rect x="416" y="424" width="1" height="1" fill="#58D048"/><rect x="394" y="354" width="1" height="1" fill="#58D048"/><rect x="410" y="501" width="1" height="1" fill="#A02818"/><rect x="412" y="327" width="1" height="1" fill="#58D048"/><rect x="414" y="377" width="1" height="1" fill="#A02818"/><rect x="424" y="355" width="1" height="1" fill="#70D058"/><rect x="404" y="312" width="1" height="1" fill="#40C840"/><rect x="404" y="349" width="1" height="1" fill="#70D058"/><rect x="410" y="337" width="1" height="1" fill="#90C838"/><rect x="418" y="356" width="1" height="1" fill="#A0D040"/><rect x="413" y="377" width="1" height="1" fill="#58D048"/><rect x="421" y="371" width="1" height="1" fill="#70D058"/><rect x="410" y="322" width="1" height="1" fill="#B03020"/><rect x="422" y="362" width="1" height="1" fill="#58D048"/><rect x="407" y="316" width="1" height="1" fill="#A0D040"/><rect x="419" y="433" width="1" height="1" fill="#C84030"/><rect x="417" y="321" width="1" height="1" fill="#40C840"/><rect x="412" y="337" width="1" height="1" fill="#58D048"/><rect x="401" y="241" width="1" height="1" fill="#C84030"/><rect x="419" y="271" width="1" height="1" fill="#C03828"/><rect x="412" y="297" width="1" height="1" fill="#38B838"/><rect x="397" y="346" width="1" height="1" fill="#58D048"/><rect x="432" y="324" width="1" height="1" fill="#38B838"/><rect x="410" y="275" width="1" height="1" fill="#C03828"/><rect x="430" y="276" width="1" height="1" fill="#40C840"/><rect x="417" y="327" width="1" height="1" fill="#40C840"/><rect x="412" y="285" width="1" height="1" fill="#58D048"/><rect x="401" y="292" width="1" height="1" fill="#38B838"/><rect x="399" y="318" width="1" height="1" fill="#38B838"/><rect x="410" y="465" width="1" height="1" fill="#C03828"/><rect x="412" y="310" width="1" height="1" fill="#38B838"/><rect x="412" y="291" width="1" height="1" fill="#B03020"/><rect x="390" y="342" width="1" height="1" fill="#58D048"/><rect x="418" y="307" width="1" height="1" fill="#C84030"/><rect x="420" y="374" width="1" height="1" fill="#70D058"/><rect x="413" y="504" width="1" height="1" fill="#A02818"/><rect x="411" y="331" width="1" height="1" fill="#70D058"/><rect x="418" y="373" width="1" height="1" fill="#58D048"/><rect x="412" y="338" width="1" height="1" fill="#A0D040"/><rect x="416" y="150" width="1" height="1" fill="#B03020"/><rect x="412" y="328" width="1" height="1" fill="#C03828"/><rect x="397" y="326" width="1" height="1" fill="#70D058"/><rect x="402" y="294" width="1" height="1" fill="#C03828"/><rect x="419" y="340" width="1" height="1" fill="#A0D040"/><rect x="414" y="243" width="1" height="1" fill="#C84030"/><rect x="407" y="326" width="1" height="1" fill="#A0D040"/><rect x="416" y="152" width="1" height="1" fill="#C03828"/><rect x="416" y="312" width="1" height="1" fill="#70D058"/><rect x="407" y="263" width="1" height="1" fill="#A02818"/><rect x="420" y="447" width="1" height="1" fill="#C84030"/><rect x="396" y="373" width="1" height="1" fill="#58D048"/><rect x="417" y="318" width="1" height="1" fill="#40C840"/><rect x="427" y="316" width="1" height="1" fill="#40C840"/><rect x="425" y="218" width="1" height="1" fill="#A02818"/><rect x="418" y="289" width="1" height="1" fill="#38B838"/><rect x="407" y="264" width="1" height="1" fill="#B03020"/><rect x="419" y="356" width="1" height="1" fill="#C03828"/><rect x="420" y="333" width="1" height="1" fill="#C84030"/><rect x="421" y="301" width="1" height="1" fill="#38B838"/><rect x="400" y="297" width="1" height="1" fill="#40C840"/><rect x="432" y="350" width="1" height="1" fill="#70D058"/><rect x="419" y="206" width="1" height="1" fill="#C03828"/><rect x="412" y="152" width="1" height="1" fill="#B03020"/><rect x="410" y="509" width="1" height="1" fill="#C84030"/><rect x="420" y="321" width="1" height="1" fill="#58D048"/><rect x="404" y="341" width="1" height="1" fill="#B03020"/><rect x="409" y="332" width="1" height="1" fill="#C84030"/><rect x="422" y="337" width="1" height="1" fill="#38B838"/><rect x="414" y="363" width="1" height="1" fill="#70D058"/><rect x="422" y="203" width="1" height="1" fill="#B03020"/><rect x="406" y="300" width="1" height="1" fill="#B03020"/><rect x="415" y="364" width="1" height="1" fill="#38B838"/><rect x="416" y="353" width="1" height="1" fill="#70D058"/><rect x="391" y="309" width="1" height="1" fill="#70D058"/><rect x="412" y="390" width="1" height="1" fill="#C03828"/><rect x="416" y="357" width="1" height="1" fill="#A02818"/><rect x="415" y="380" width="1" height="1" fill="#A02818"/><rect x="420" y="316" width="1" height="1" fill="#38B838"/><rect x="438" y="335" width="1" height="1" fill="#B03020"/><rect x="412" y="274" width="1" height="1" fill="#A02818"/><rect x="425" y="379" width="1" height="1" fill="#38B838"/><rect x="416" y="352" width="1" height="1" fill="#70D058"/><rect x="408" y="263" width="1" height="1" fill="#40C840"/><rect x="413" y="332" width="1" height="1" fill="#A02818"/><rect x="409" y="326" width="1" height="1" fill="#C84030"/><rect x="413" y="332" width="1" height="1" fill="#90C838"/><rect x="406" y="401" width="1" height="1" fill="#58D048"/><rect x="402" y="326" width="1" height="1" fill="#58D048"/><rect x="393" y="326" width="1" height="1" fill="#38B838"/><rect x="410" y="402" width="1" height="1" fill="#C84030"/><rect x="398" y="185" width="1" height="1" fill="#C03828"/><rect x="418" y="398" width="1" height="1" fill="#38B838"/><rect x="405" y="324" width="1" height="1" fill="#58D048"/><rect x="424" y="329" width="1" height="1" fill="#70D058"/><rect x="401" y="311" width="1" height="1" fill="#40C840"/><rect x="417" y="362" width="1" height="1" fill="#C84030"/><rect x="409" y="200" width="1" height="1" fill="#C84030"/><rect x="417" y="213" width="1" height="1" fill="#C03828"/><rect x="419" y="273" width="1" height="1" fill="#C03828"/><rect x="414" y="346" width="1" height="1" fill="#B03020"/><rect x="421" y="514" width="1" height="1" fill="#C03828"/><rect x="409" y="355" width="1" height="1" fill="#70D058"/><rect x="407" y="377" width="1" height="1" fill="#C84030"/><rect x="414" y="499" width="1" height="1" fill="#B03020"/><rect x="410" y="363" width="1" height="1" fill="#B03020"/><rect x="411" y="476" width="1" height="1" fill="#A02818"/><rect x="416" y="509" width="1" height="1" fill="#B03020"/><rect x="389" y="364" width="1" height="1" fill="#40C840"/><rect x="413" y="395" width="1" height="1" fill="#A02818"/><rect x="385" y="298" width="1" height="1" fill="#38B838"/><rect x="420" y="458" width="1" height="1" fill="#B03020"/><rect x="403" y="286" width="1" height="1" fill="#58D048"/><rect x="401" y="331" width="1" height="1" fill="#58D048"/><rect x="410" y="350" width="1" height="1" fill="#B03020"/><rect x="413" y="329" width="1" height="1" fill="#38B838"/><rect x="411" y="324" width="1" height="1" fill="#58D048"/><rect x="418" y="305" width="1" height="1" fill="#C84030"/><rect x="416" y="285" width="1" height="1" fill="#B03020"/><rect x="412" y="345" width="1" height="1" fill="#90C838"/><rect x="401" y="356" width="1" height="1" fill="#40C840"/><rect x="406" y="275" width="1" height="1" fill="#40C840"/><rect x="418" y="332" width="1" height="1" fill="#A02818"/><rect x="415" y="501" width="1" height="1" fill="#C03828"/><circle cx="414" cy="131" r="10" fill="#0000F8"/><circle cx="414" cy="531" r="10" fill="#0000F8"/></svg>
<div class="rb" style="left:56px;top:663px;width:137px;height:20px;background:#F0F0F0"></div>
<span class="t" style="left:62.20px;top:667px;font-size:12px;color:#1010A8;transform:scale(0.8826,1.0000);transform-origin:0 11px;">Charge fixed point charges</span>
<div class="rb" style="left:56px;top:687px;width:137px;height:20px;background:#F0F0F0"></div>
<span class="t" style="left:72.20px;top:691px;font-size:12px;color:#1010A8;transform:scale(0.9099,1.0000);transform-origin:0 11px;">No particle interaction</span>
<div class="rb" style="left:56px;top:711px;width:137px;height:20px;background:#F0F0F0"></div>
<span class="t" style="left:93.20px;top:715px;font-size:12px;color:#1010A8;transform:scale(0.9078,1.0000);transform-origin:0 11px;">Annotationes</span>
<div class="rb" style="left:200px;top:663px;width:160px;height:20px;background:#F0F0F0"></div>
<span class="t" style="left:219.20px;top:667px;font-size:12px;color:#1010A8;transform:scale(0.8993,1.0000);transform-origin:0 11px;">Create conducting sphere</span>
<div class="rb" style="left:368px;top:663px;width:49px;height:27px;background:#F0F0F0"></div>
<div class="rb" style="left:424px;top:663px;width:41px;height:27px;background:#F0F0F0"></div>
<div class="rb" style="left:472px;top:663px;width:41px;height:27px;background:#F0F0F0"></div>
<div class="rb" style="left:520px;top:663px;width:41px;height:27px;background:#F0F0F0"></div>
<div class="rb" style="left:568px;top:663px;width:41px;height:27px;background:#F0F0F0"></div>
<div class="rb" style="left:616px;top:663px;width:33px;height:27px;background:#F0F0F0"></div>
<div class="rb" style="left:696px;top:663px;width:89px;height:27px;background:#F0F0F0"></div>
<div class="rb" style="left:792px;top:663px;width:41px;height:27px;background:#F0F0F0"></div>
<div style="position:absolute;left:656px;top:663px;width:33px;height:27px;box-sizing:border-box;border:1px solid #606060;background:#F0F0F0"></div>
<div class="rb" style="left:657px;top:664px;width:31px;height:25px;background:#F0F0F0"></div>
<div style="position:absolute;left:660px;top:667px;width:26px;height:20px;box-sizing:border-box;border:1px dotted #000"></div>
<svg style="left:374px;top:668px" width="16" height="18" viewBox="0 0 16 18" shape-rendering="crispEdges">
<defs><linearGradient id="dg" x1="0" y1="0" x2="1" y2="1"><stop offset="0" stop-color="#F89040"/><stop offset="0.4" stop-color="#FFC070"/><stop offset="1" stop-color="#FFB888"/></linearGradient></defs>
<rect x="1" y="1" width="2" height="15" fill="#B00010"/>
<rect x="3" y="3" width="1" height="13" fill="#F8E8E8"/>
<rect x="4" y="1" width="10" height="15" fill="#D81010"/>
<rect x="3" y="1" width="11" height="2" fill="#B80000"/>
<rect x="5" y="3" width="7" height="12" fill="url(#dg)"/>
<rect x="4" y="15" width="4" height="2" fill="#C01828"/>
<rect x="4" y="10" width="3" height="1" fill="#000"/><rect x="4" y="9" width="1" height="2" fill="#000"/>
</svg>
<span class="t" style="left:394.20px;top:670px;font-size:12px;color:#000;transform:scale(0.8800,1.0000);transform-origin:0 11px;">Exit</span>
<div style="position:absolute;left:401px;top:682px;width:5px;height:1px;background:#000"></div>
<svg style="left:432px;top:665px" width="26" height="24" viewBox="0 0 26 24">
<path d="M8.5 8 V12.5 H15" stroke="#4848B0" stroke-width="1" fill="none" shape-rendering="crispEdges"/>
<path d="M8.5 12.5 L5 16" stroke="#4848B0" stroke-width="1" fill="none"/>
<text x="6.5" y="7" font-family="Liberation Serif" font-weight="bold" font-size="8" fill="#202040">z</text>
<text x="15.5" y="15" font-family="Liberation Serif" font-weight="bold" font-size="9" fill="#202040">y</text>
<text x="3.5" y="22" font-family="Liberation Serif" font-weight="bold" font-size="8" fill="#202040">x</text>
</svg>
<svg style="left:482px;top:667px" width="24" height="20" viewBox="0 0 24 20">
<rect x="3" y="3" width="1" height="1" fill="#3434A8"/><rect x="4" y="3" width="1" height="1" fill="#3434A8"/><rect x="5" y="3" width="1" height="1" fill="#3434A8"/><rect x="6" y="3" width="1" height="1" fill="#3434A8"/><rect x="2" y="4" width="1" height="1" fill="#3434A8"/><rect x="3" y="4" width="1" height="1" fill="#3434A8"/><rect x="6" y="4" width="1" height="1" fill="#3434A8"/><rect x="7" y="4" width="1" height="1" fill="#3434A8"/><rect x="2" y="5" width="1" height="1" fill="#3434A8"/><rect x="3" y="5" width="1" height="1" fill="#3434A8"/><rect x="4" y="5" width="1" height="1" fill="#3434A8"/><rect x="5" y="5" width="1" height="1" fill="#3434A8"/><rect x="6" y="5" width="1" height="1" fill="#3434A8"/><rect x="7" y="5" width="1" height="1" fill="#3434A8"/><rect x="2" y="6" width="1" height="1" fill="#3434A8"/><rect x="3" y="6" width="1" height="1" fill="#3434A8"/><rect x="3" y="7" width="1" height="1" fill="#3434A8"/><rect x="4" y="7" width="1" height="1" fill="#3434A8"/><rect x="5" y="7" width="1" height="1" fill="#3434A8"/><rect x="6" y="7" width="1" height="1" fill="#3434A8"/><rect x="7" y="7" width="1" height="1" fill="#3434A8"/><rect x="9" y="5" width="3" height="1" fill="#3434A8"/>
<path d="M10.5 12 H21" stroke="#3040C0" stroke-width="2"/>
<path d="M14 8.5 L10.5 12 L14 15.5" stroke="#3040C0" stroke-width="1.4" fill="none"/>
</svg>
<svg style="left:530px;top:667px" width="24" height="20" viewBox="0 0 24 20">
<rect x="3" y="3" width="1" height="1" fill="#3434A8"/><rect x="4" y="3" width="1" height="1" fill="#3434A8"/><rect x="5" y="3" width="1" height="1" fill="#3434A8"/><rect x="6" y="3" width="1" height="1" fill="#3434A8"/><rect x="2" y="4" width="1" height="1" fill="#3434A8"/><rect x="3" y="4" width="1" height="1" fill="#3434A8"/><rect x="6" y="4" width="1" height="1" fill="#3434A8"/><rect x="7" y="4" width="1" height="1" fill="#3434A8"/><rect x="2" y="5" width="1" height="1" fill="#3434A8"/><rect x="3" y="5" width="1" height="1" fill="#3434A8"/><rect x="4" y="5" width="1" height="1" fill="#3434A8"/><rect x="5" y="5" width="1" height="1" fill="#3434A8"/><rect x="6" y="5" width="1" height="1" fill="#3434A8"/><rect x="7" y="5" width="1" height="1" fill="#3434A8"/><rect x="2" y="6" width="1" height="1" fill="#3434A8"/><rect x="3" y="6" width="1" height="1" fill="#3434A8"/><rect x="3" y="7" width="1" height="1" fill="#3434A8"/><rect x="4" y="7" width="1" height="1" fill="#3434A8"/><rect x="5" y="7" width="1" height="1" fill="#3434A8"/><rect x="6" y="7" width="1" height="1" fill="#3434A8"/><rect x="7" y="7" width="1" height="1" fill="#3434A8"/><rect x="9" y="5" width="3" height="1" fill="#3434A8"/>
<path d="M11.5 9.5 L19 16.5 M19 9.5 L11.5 16.5" stroke="#E04020" stroke-width="1.1"/>
</svg>
<svg style="left:576px;top:667px" width="28" height="20" viewBox="0 0 28 20">
<path d="M5.5 3 V9 M3 5.5 L5.5 3 L8 5.5" stroke="#700020" stroke-width="1.2" fill="none"/>
<text x="10.5" y="9" font-family="Liberation Serif" font-weight="bold" font-size="8.5" fill="#780028">B+</text>
<text x="3.5" y="17" font-family="Liberation Serif" font-weight="bold" font-size="8.5" fill="#780028">H+</text>
<path d="M19.5 10.5 V16.5 M17 14 L19.5 16.5 L22 14" stroke="#700020" stroke-width="1.2" fill="none"/>
</svg>
<svg style="left:622px;top:667px" width="24" height="20" viewBox="0 0 24 20">
<text x="4" y="9" font-family="Liberation Serif" font-weight="bold" font-size="8.5" fill="#780028">B+</text>
<text x="2" y="17" font-family="Liberation Serif" font-weight="bold" font-size="8.5" fill="#780028">H+</text>
<path d="M14.5 8 L20.5 17 M20.5 8 L14.5 17" stroke="#E02820" stroke-width="1.1"/>
</svg>
<svg style="left:664px;top:668px" width="18" height="17" viewBox="0 0 18 17" shape-rendering="crispEdges">
<path d="M3 6 H12 V14 H3 Z" fill="none" stroke="#000" stroke-width="2"/>
<path d="M3 5 L7 3 H16 V11 L12.5 14" fill="none" stroke="#000" stroke-width="2"/>
<path d="M12 5.5 L15 3.5" fill="none" stroke="#000" stroke-width="1"/>
<rect x="6" y="7" width="1" height="1" fill="#909090"/><rect x="6" y="9" width="1" height="1" fill="#909090"/><rect x="6" y="11" width="1" height="1" fill="#909090"/><rect x="8" y="11" width="1" height="1" fill="#909090"/><rect x="10" y="11" width="1" height="1" fill="#909090"/><rect x="4" y="12" width="1" height="1" fill="#909090"/>
</svg>
<svg style="left:710px;top:668px" width="18" height="18" viewBox="0 0 18 18">
<circle cx="9" cy="9" r="7.6" fill="none" stroke="#B060C0" stroke-width="0.9"/>
<rect x="8.5" y="3" width="1" height="1" fill="#000"/><rect x="8.5" y="14" width="1" height="1" fill="#000"/>
<rect x="3" y="8.5" width="1" height="1" fill="#000"/><rect x="14" y="8.5" width="1" height="1" fill="#000"/>
<path d="M11 5.5 L8.5 8.5 L11 11" stroke="#4050C0" stroke-width="1" fill="none"/>
</svg>
<span class="t" style="left:733.20px;top:670px;font-size:12px;color:#000;transform:scale(0.8862,1.0000);transform-origin:0 11px;">Resume</span>
<div style="position:absolute;left:733px;top:682px;width:8px;height:1px;background:#000"></div>
<svg style="left:802px;top:667px" width="20" height="19" viewBox="0 0 20 19">
<rect x="1" y="0" width="19" height="19" fill="#F8F8F8"/>
<path d="M10.5 3.5 A6 6 0 1 1 5 11" stroke="#40A060" stroke-width="2" fill="none"/>
<path d="M2 9 L5.5 6.5 L8 11 Z" fill="#40A060"/>
</svg>
<div class="gb" style="left:840px;top:39px;width:247px;height:159px"></div>
<span class="t" style="left:848.20px;top:47px;font-size:12px;color:#1010A8;transform:scale(0.8812,1.0000);transform-origin:0 11px;">1 gauss = 10E-4 tesla</span>
<div class="sk" style="left:848px;top:71px;width:57px;height:24px;background:#C0C0C0"></div>
<div class="rb" style="left:905px;top:71px;width:17px;height:12px;background:#F0F0F0"></div>
<div class="rb" style="left:905px;top:83px;width:17px;height:12px;background:#F0F0F0"></div>
<div style="position:absolute;left:910px;top:75px;width:0;height:0;border-left:3px solid transparent;border-right:3px solid transparent;border-bottom:3px solid #000"></div>
<div style="position:absolute;left:910px;top:87px;width:0;height:0;border-left:3px solid transparent;border-right:3px solid transparent;border-top:3px solid #000"></div>
<span class="t" style="left:851.20px;top:74px;font-size:14px;color:#1010A8;transform:scale(0.8900,1.0000);transform-origin:0 13px;">15000</span>
<span class="t" style="left:928.20px;top:70px;font-size:14px;color:#1010A8;transform:scale(0.9203,1.0000);transform-origin:0 13px;">B in centre</span>
<span class="t" style="left:851.20px;top:103px;font-size:12px;color:#1010B8;transform:scale(0.8911,1.1000);transform-origin:0 11px;font-style:italic;">Vertical pointing upwards (=  + )</span>
<div class="sk" style="left:848px;top:127px;width:57px;height:24px;background:#C0C0C0"></div>
<div class="rb" style="left:905px;top:127px;width:17px;height:12px;background:#F0F0F0"></div>
<div class="rb" style="left:905px;top:139px;width:17px;height:12px;background:#F0F0F0"></div>
<div style="position:absolute;left:910px;top:131px;width:0;height:0;border-left:3px solid transparent;border-right:3px solid transparent;border-bottom:3px solid #000"></div>
<div style="position:absolute;left:910px;top:143px;width:0;height:0;border-left:3px solid transparent;border-right:3px solid transparent;border-top:3px solid #000"></div>
<span class="t" style="left:851.20px;top:130px;font-size:14px;color:#1010A8;transform:scale(0.8900,1.0000);transform-origin:0 13px;">15000</span>
<span class="t" style="left:928.20px;top:130px;font-size:12px;color:#1010A8;transform:scale(0.8761,1.0000);transform-origin:0 11px;">B in middle vertical  sides</span>
<div class="sk" style="left:848px;top:168px;width:57px;height:24px;background:#C0C0C0"></div>
<div class="rb" style="left:905px;top:168px;width:17px;height:12px;background:#F0F0F0"></div>
<div class="rb" style="left:905px;top:180px;width:17px;height:12px;background:#F0F0F0"></div>
<div style="position:absolute;left:910px;top:172px;width:0;height:0;border-left:3px solid transparent;border-right:3px solid transparent;border-bottom:3px solid #000"></div>
<div style="position:absolute;left:910px;top:184px;width:0;height:0;border-left:3px solid transparent;border-right:3px solid transparent;border-top:3px solid #000"></div>
<span class="t" style="left:851.20px;top:171px;font-size:14px;color:#1010A8;transform:scale(0.8900,1.0000);transform-origin:0 13px;">15000</span>
<span class="t" style="left:928.20px;top:171px;font-size:12px;color:#1010A8;transform:scale(0.8769,1.0000);transform-origin:0 11px;">B in middle top and  bottom sides</span>
<div class="rb" style="left:848px;top:207px;width:75px;height:25px;background:#F0F0F0"></div>
<span class="t" style="left:855.20px;top:213px;font-size:12px;color:#000;transform:scale(0.8994,1.0000);transform-origin:0 11px;">No electrons</span>
<div style="position:absolute;left:873px;top:225px;width:6px;height:1px;background:#000"></div>
<div class="rb" style="left:848px;top:239px;width:73px;height:25px;background:#F0F0F0"></div>
<svg style="left:856px;top:245px" width="12" height="13" viewBox="0 0 12 13">
<path d="M2 1 L5.5 11 L9.5 1" stroke="#208040" stroke-width="1.7" fill="none"/>
</svg>
<span class="t" style="left:872.20px;top:245px;font-size:12px;color:#000;transform:scale(0.9155,1.0000);transform-origin:0 11px;">Input Ok</span>
<div style="position:absolute;left:872px;top:258px;width:4px;height:1px;background:#000"></div>
<div class="rb" style="left:848px;top:271px;width:81px;height:25px;background:#F0F0F0"></div>
<svg style="left:859px;top:276px" width="19" height="16" viewBox="0 0 19 16">
<circle cx="6.5" cy="6.7" r="4.4" fill="#A8D8E8" stroke="#E06030" stroke-width="1.6"/>
<path d="M10 10 L15.5 14.5" stroke="#601818" stroke-width="1.8"/>
</svg>
<span class="t" style="left:881.20px;top:278px;font-size:12px;color:#000;transform:scale(0.9190,1.0000);transform-origin:0 11px;">Magnify</span>
<div style="position:absolute;left:882px;top:290px;width:8px;height:1px;background:#000"></div>
<div class="sk" style="left:936px;top:271px;width:25px;height:25px;background:#C0C0C0"></div>
<div class="rb" style="left:961px;top:271px;width:17px;height:12px;background:#F0F0F0"></div>
<div class="rb" style="left:961px;top:283px;width:17px;height:13px;background:#F0F0F0"></div>
<div style="position:absolute;left:966px;top:275px;width:0;height:0;border-left:3px solid transparent;border-right:3px solid transparent;border-bottom:3px solid #000"></div>
<div style="position:absolute;left:966px;top:288px;width:0;height:0;border-left:3px solid transparent;border-right:3px solid transparent;border-top:3px solid #000"></div>
<span class="t" style="left:939.20px;top:274px;font-size:14px;color:#1010A8;transform:scale(0.8900,1.0000);transform-origin:0 13px;">1</span>
<span class="t" style="left:855.20px;top:319px;font-size:12px;color:#1010A8;transform:scale(1.0601,1.0000);transform-origin:0 11px;">dt =</span>
<span class="t" style="left:885.20px;top:319px;font-size:14px;color:#5050A8;transform:scale(0.8739,1.0000);transform-origin:0 13px;">10</span>
<span class="t" style="left:902.20px;top:313px;font-size:12px;color:#5050A8;transform:scale(1.0854,1.0000);transform-origin:0 11px;">-n</span>
<div class="sk" style="left:920px;top:311px;width:25px;height:25px;background:#C0C0C0"></div>
<div class="rb" style="left:945px;top:311px;width:17px;height:12px;background:#F0F0F0"></div>
<div class="rb" style="left:945px;top:323px;width:17px;height:13px;background:#F0F0F0"></div>
<div style="position:absolute;left:950px;top:315px;width:0;height:0;border-left:3px solid transparent;border-right:3px solid transparent;border-bottom:3px solid #000"></div>
<div style="position:absolute;left:950px;top:328px;width:0;height:0;border-left:3px solid transparent;border-right:3px solid transparent;border-top:3px solid #000"></div>
<span class="t" style="left:923.20px;top:314px;font-size:14px;color:#1010A8;transform:scale(0.8900,1.0000);transform-origin:0 13px;">10</span>
<div class="gb" style="left:848px;top:351px;width:143px;height:151px"></div>
<span class="t" style="left:855.20px;top:360px;font-size:12px;color:#1010A8;transform:scale(0.9108,1.0000);transform-origin:0 11px;">Top and bottom ring</span>
<span class="t" style="left:855.20px;top:384px;font-size:12px;color:#1010A8;transform:scale(0.9117,1.0000);transform-origin:0 11px;">Voltage (kV)</span>
<div class="sk" style="left:920px;top:375px;width:41px;height:25px;background:#C0C0C0"></div>
<div class="rb" style="left:961px;top:375px;width:17px;height:12px;background:#F0F0F0"></div>
<div class="rb" style="left:961px;top:387px;width:17px;height:13px;background:#F0F0F0"></div>
<div style="position:absolute;left:966px;top:379px;width:0;height:0;border-left:3px solid transparent;border-right:3px solid transparent;border-bottom:3px solid #000"></div>
<div style="position:absolute;left:966px;top:392px;width:0;height:0;border-left:3px solid transparent;border-right:3px solid transparent;border-top:3px solid #000"></div>
<span class="t" style="left:923.20px;top:378px;font-size:14px;color:#1010A8;transform:scale(0.8900,1.0000);transform-origin:0 13px;">200</span>
<span class="t" style="left:855.20px;top:408px;font-size:12px;color:#1010A8;transform:scale(0.9294,1.0000);transform-origin:0 11px;">d (cm)</span>
<div class="sk" style="left:920px;top:407px;width:41px;height:25px;background:#C0C0C0"></div>
<div class="rb" style="left:961px;top:407px;width:17px;height:12px;background:#F0F0F0"></div>
<div class="rb" style="left:961px;top:419px;width:17px;height:13px;background:#F0F0F0"></div>
<div style="position:absolute;left:966px;top:411px;width:0;height:0;border-left:3px solid transparent;border-right:3px solid transparent;border-bottom:3px solid #000"></div>
<div style="position:absolute;left:966px;top:424px;width:0;height:0;border-left:3px solid transparent;border-right:3px solid transparent;border-top:3px solid #000"></div>
<span class="t" style="left:923.20px;top:410px;font-size:14px;color:#1010A8;transform:scale(0.8900,1.0000);transform-origin:0 13px;">31</span>
<span class="t" style="left:855.20px;top:448px;font-size:12px;color:#1010A8;transform:scale(0.8842,1.0000);transform-origin:0 11px;">r1 (cm)</span>
<div class="sk" style="left:920px;top:439px;width:41px;height:25px;background:#C0C0C0"></div>
<div class="rb" style="left:961px;top:439px;width:17px;height:12px;background:#F0F0F0"></div>
<div class="rb" style="left:961px;top:451px;width:17px;height:13px;background:#F0F0F0"></div>
<div style="position:absolute;left:966px;top:443px;width:0;height:0;border-left:3px solid transparent;border-right:3px solid transparent;border-bottom:3px solid #000"></div>
<div style="position:absolute;left:966px;top:456px;width:0;height:0;border-left:3px solid transparent;border-right:3px solid transparent;border-top:3px solid #000"></div>
<span class="t" style="left:923.20px;top:442px;font-size:14px;color:#1010A8;transform:scale(0.8900,1.0000);transform-origin:0 13px;">10</span>
<span class="t" style="left:855.20px;top:480px;font-size:12px;color:#1010A8;transform:scale(0.8842,1.0000);transform-origin:0 11px;">r2 (cm)</span>
<div class="sk" style="left:920px;top:471px;width:41px;height:25px;background:#C0C0C0"></div>
<div class="rb" style="left:961px;top:471px;width:17px;height:12px;background:#F0F0F0"></div>
<div class="rb" style="left:961px;top:483px;width:17px;height:13px;background:#F0F0F0"></div>
<div style="position:absolute;left:966px;top:475px;width:0;height:0;border-left:3px solid transparent;border-right:3px solid transparent;border-bottom:3px solid #000"></div>
<div style="position:absolute;left:966px;top:488px;width:0;height:0;border-left:3px solid transparent;border-right:3px solid transparent;border-top:3px solid #000"></div>
<span class="t" style="left:923.20px;top:474px;font-size:14px;color:#1010A8;transform:scale(0.8900,1.0000);transform-origin:0 13px;">1</span>
<div class="gb" style="left:848px;top:511px;width:143px;height:119px"></div>
<span class="t" style="left:855.20px;top:519px;font-size:12px;color:#1010A8;transform:scale(0.8963,1.0000);transform-origin:0 11px;">Middle ring</span>
<span class="t" style="left:855.20px;top:544px;font-size:12px;color:#1010A8;transform:scale(0.9117,1.0000);transform-origin:0 11px;">Voltage (kV)</span>
<div class="sk" style="left:920px;top:535px;width:41px;height:25px;background:#C0C0C0"></div>
<div class="rb" style="left:961px;top:535px;width:17px;height:12px;background:#F0F0F0"></div>
<div class="rb" style="left:961px;top:547px;width:17px;height:13px;background:#F0F0F0"></div>
<div style="position:absolute;left:966px;top:539px;width:0;height:0;border-left:3px solid transparent;border-right:3px solid transparent;border-bottom:3px solid #000"></div>
<div style="position:absolute;left:966px;top:552px;width:0;height:0;border-left:3px solid transparent;border-right:3px solid transparent;border-top:3px solid #000"></div>
<span class="t" style="left:922.20px;top:538px;font-size:14px;color:#1010A8;transform:scale(0.8900,1.0000);transform-origin:0 13px;">-200</span>
<span class="t" style="left:855.20px;top:576px;font-size:12px;color:#1010A8;transform:scale(0.8842,1.0000);transform-origin:0 11px;">r1 (cm)</span>
<div class="sk" style="left:920px;top:567px;width:41px;height:25px;background:#C0C0C0"></div>
<div class="rb" style="left:961px;top:567px;width:17px;height:12px;background:#F0F0F0"></div>
<div class="rb" style="left:961px;top:579px;width:17px;height:13px;background:#F0F0F0"></div>
<div style="position:absolute;left:966px;top:571px;width:0;height:0;border-left:3px solid transparent;border-right:3px solid transparent;border-bottom:3px solid #000"></div>
<div style="position:absolute;left:966px;top:584px;width:0;height:0;border-left:3px solid transparent;border-right:3px solid transparent;border-top:3px solid #000"></div>
<span class="t" style="left:923.20px;top:570px;font-size:14px;color:#1010A8;transform:scale(0.8900,1.0000);transform-origin:0 13px;">20</span>
<span class="t" style="left:855.20px;top:608px;font-size:12px;color:#1010A8;transform:scale(0.8842,1.0000);transform-origin:0 11px;">r2 (cm)</span>
<div class="sk" style="left:920px;top:599px;width:41px;height:25px;background:#C0C0C0"></div>
<div class="rb" style="left:961px;top:599px;width:17px;height:12px;background:#F0F0F0"></div>
<div class="rb" style="left:961px;top:611px;width:17px;height:13px;background:#F0F0F0"></div>
<div style="position:absolute;left:966px;top:603px;width:0;height:0;border-left:3px solid transparent;border-right:3px solid transparent;border-bottom:3px solid #000"></div>
<div style="position:absolute;left:966px;top:616px;width:0;height:0;border-left:3px solid transparent;border-right:3px solid transparent;border-top:3px solid #000"></div>
<span class="t" style="left:923.20px;top:602px;font-size:14px;color:#1010A8;transform:scale(0.8900,1.0000);transform-origin:0 13px;">1</span>
<div class="gb" style="left:848px;top:639px;width:143px;height:127px"></div>
<span class="t" style="left:855.20px;top:647px;font-size:12px;color:#1010A8;transform:scale(0.9092,1.0000);transform-origin:0 11px;">Top and bottom sphere</span>
<span class="t" style="left:855.20px;top:671px;font-size:12px;color:#1010A8;transform:scale(0.9117,1.0000);transform-origin:0 11px;">Voltage (kV)</span>
<div class="sk" style="left:920px;top:663px;width:41px;height:25px;background:#C0C0C0"></div>
<div class="rb" style="left:961px;top:663px;width:17px;height:12px;background:#F0F0F0"></div>
<div class="rb" style="left:961px;top:675px;width:17px;height:13px;background:#F0F0F0"></div>
<div style="position:absolute;left:966px;top:667px;width:0;height:0;border-left:3px solid transparent;border-right:3px solid transparent;border-bottom:3px solid #000"></div>
<div style="position:absolute;left:966px;top:680px;width:0;height:0;border-left:3px solid transparent;border-right:3px solid transparent;border-top:3px solid #000"></div>
<span class="t" style="left:922.20px;top:666px;font-size:14px;color:#1010A8;transform:scale(0.8900,1.0000);transform-origin:0 13px;">-200</span>
<span class="t" style="left:855.20px;top:696px;font-size:12px;color:#1010A8;transform:scale(0.8842,1.0000);transform-origin:0 11px;">r1 (cm)</span>
<div class="sk" style="left:920px;top:695px;width:41px;height:25px;background:#C0C0C0"></div>
<div class="rb" style="left:961px;top:695px;width:17px;height:12px;background:#F0F0F0"></div>
<div class="rb" style="left:961px;top:707px;width:17px;height:13px;background:#F0F0F0"></div>
<div style="position:absolute;left:966px;top:699px;width:0;height:0;border-left:3px solid transparent;border-right:3px solid transparent;border-bottom:3px solid #000"></div>
<div style="position:absolute;left:966px;top:712px;width:0;height:0;border-left:3px solid transparent;border-right:3px solid transparent;border-top:3px solid #000"></div>
<span class="t" style="left:923.20px;top:698px;font-size:14px;color:#1010A8;transform:scale(0.8900,1.0000);transform-origin:0 13px;">2</span>
<span class="t" style="left:855.20px;top:736px;font-size:12px;color:#1010A8;transform:scale(0.9294,1.0000);transform-origin:0 11px;">d (cm)</span>
<div class="sk" style="left:920px;top:727px;width:41px;height:25px;background:#C0C0C0"></div>
<div class="rb" style="left:961px;top:727px;width:17px;height:12px;background:#F0F0F0"></div>
<div class="rb" style="left:961px;top:739px;width:17px;height:13px;background:#F0F0F0"></div>
<div style="position:absolute;left:966px;top:731px;width:0;height:0;border-left:3px solid transparent;border-right:3px solid transparent;border-bottom:3px solid #000"></div>
<div style="position:absolute;left:966px;top:744px;width:0;height:0;border-left:3px solid transparent;border-right:3px solid transparent;border-top:3px solid #000"></div>
<span class="t" style="left:923.20px;top:730px;font-size:14px;color:#1010A8;transform:scale(0.8900,1.0000);transform-origin:0 13px;">50</span>
<span class="t" style="left:855.20px;top:791px;font-size:12px;color:#1010A8;transform:scale(0.9043,1.0000);transform-origin:0 11px;">Amount D+</span>
<div class="sk" style="left:920px;top:783px;width:41px;height:25px;background:#C0C0C0"></div>
<div class="rb" style="left:961px;top:783px;width:17px;height:12px;background:#F0F0F0"></div>
<div class="rb" style="left:961px;top:795px;width:17px;height:13px;background:#F0F0F0"></div>
<div style="position:absolute;left:966px;top:787px;width:0;height:0;border-left:3px solid transparent;border-right:3px solid transparent;border-bottom:3px solid #000"></div>
<div style="position:absolute;left:966px;top:800px;width:0;height:0;border-left:3px solid transparent;border-right:3px solid transparent;border-top:3px solid #000"></div>
<span class="t" style="left:923.20px;top:786px;font-size:14px;color:#1010A8;transform:scale(0.8900,1.0000);transform-origin:0 13px;">500</span>
<span class="t" style="left:855.20px;top:831px;font-size:12px;color:#1010A8;transform:scale(0.8980,1.0000);transform-origin:0 11px;">Amount B+</span>
<div class="sk" style="left:920px;top:823px;width:41px;height:25px;background:#C0C0C0"></div>
<div class="rb" style="left:961px;top:823px;width:17px;height:12px;background:#F0F0F0"></div>
<div class="rb" style="left:961px;top:835px;width:17px;height:13px;background:#F0F0F0"></div>
<div style="position:absolute;left:966px;top:827px;width:0;height:0;border-left:3px solid transparent;border-right:3px solid transparent;border-bottom:3px solid #000"></div>
<div style="position:absolute;left:966px;top:840px;width:0;height:0;border-left:3px solid transparent;border-right:3px solid transparent;border-top:3px solid #000"></div>
<span class="t" style="left:923.20px;top:826px;font-size:14px;color:#1010A8;transform:scale(0.8900,1.0000);transform-origin:0 13px;">0</span>
<span class="t" style="left:1031.20px;top:240px;font-size:14px;color:#1010A8;transform:scale(0.9406,1.0000);transform-origin:0 13px;">Electron gun:</span>
<div class="sk" style="left:1032px;top:263px;width:121px;height:21px;background:#C0C0C0"></div>
<span class="t" style="left:1035.20px;top:267px;font-size:12px;color:#000;transform:scale(0.9300,1.0000);transform-origin:0 11px;">100</span>
<span class="t" style="left:1031.20px;top:288px;font-size:12px;color:#000;transform:scale(0.8847,1.0000);transform-origin:0 11px;">Energy range (eV)      (r1 eV to 100 keV)</span>
<span class="t" style="left:1031.20px;top:328px;font-size:12px;color:#000;transform:scale(0.8909,1.0000);transform-origin:0 11px;">Beam current range: 1 nA to 20 mA</span>
<div class="sk" style="left:1032px;top:351px;width:121px;height:21px;background:#C0C0C0"></div>
<span class="t" style="left:1035.20px;top:355px;font-size:12px;color:#000;transform:scale(0.9421,1.0000);transform-origin:0 11px;">10</span>
<span class="t" style="left:1031.20px;top:384px;font-size:12px;color:#000;transform:scale(0.8807,1.0000);transform-origin:0 11px;">Fill in nA (1 mA = 10E6 nA)</span>
<span class="t" style="left:1031.20px;top:415px;font-size:14px;color:#1010A8;transform:scale(0.9446,1.0000);transform-origin:0 13px;">Amount of electrons</span>
<div class="sk" style="left:1032px;top:439px;width:121px;height:21px;background:#C0C0C0"></div>
<span class="t" style="left:1035.20px;top:443px;font-size:12px;color:#000;transform:scale(0.9300,1.0000);transform-origin:0 11px;">500</span>
<div class="rb" style="left:1040px;top:591px;width:137px;height:25px;background:#F0F0F0"></div>
<span class="t" style="left:1047.20px;top:597px;font-size:12px;color:#000;transform:scale(0.8908,1.0000);transform-origin:0 11px;">Show extra data electrons</span>
<span class="t" style="left:1080.20px;top:679px;font-size:12px;color:#000;transform:scale(0.8565,1.0000);transform-origin:0 11px;">B field in Gauss in</span>
<span class="t" style="left:1080.20px;top:695px;font-size:12px;color:#000;transform:scale(0.8901,1.0000);transform-origin:0 11px;">B(0,5 , 0,5 , 0,0)</span>
<span class="t" style="left:1080.20px;top:711px;font-size:12px;color:#000;transform:scale(0.8906,1.0000);transform-origin:0 11px;">B(0,5 , 0,5 , 0,5 )</span>
<span class="t" style="left:1080.20px;top:727px;font-size:12px;color:#000;transform:scale(0.8901,1.0000);transform-origin:0 11px;">B(0,5 , 0,5 , 1,0)</span>
<span class="t" style="left:1080.20px;top:740px;font-size:12px;color:#000;transform:scale(0.8869,1.0000);transform-origin:0 11px;">B(0,0, 0,0, 0,0) =</span>
<span class="t" style="left:1080.20px;top:756px;font-size:12px;color:#000;transform:scale(0.8906,1.0000);transform-origin:0 11px;">B(0,0 , 0,0 , 0,5 )</span>
<span class="t" style="left:1080.20px;top:775px;font-size:12px;color:#000;transform:scale(0.8906,1.0000);transform-origin:0 11px;">B(0,0 , 0,0 , 1,0 )</span>
<span class="t" style="left:1080.20px;top:790px;font-size:12px;color:#000;transform:scale(0.8869,1.0000);transform-origin:0 11px;">B(0,5, 0,0, 0,0) =</span>
<span class="t" style="left:1080.20px;top:806px;font-size:12px;color:#000;transform:scale(0.8896,1.0000);transform-origin:0 11px;">B(0,5 , 0,0 , 0,5 ) = 1,5E4</span>
<span class="t" style="left:1080.20px;top:822px;font-size:12px;color:#000;transform:scale(0.8896,1.0000);transform-origin:0 11px;">B(0,5 , 0,0 , 1,0 ) = 1,5E4</span>
<div class="sk" style="left:1160px;top:671px;width:289px;height:137px;background:#C0C0C0"></div>
<span class="t" style="left:1163.20px;top:674px;font-size:12px;color:#000;transform:scale(0.8766,1.0000);transform-origin:0 11px;">Etotal = 1,707E-12 J</span>
<div class="rb" style="left:1448px;top:671px;width:17px;height:17px;background:#F0F0F0"></div>
<svg style="left:1450px;top:673px" width="13" height="13" viewBox="0 0 13 13">
<path d="M2.5 2.5 L10.5 10.5 M10.5 2.5 L2.5 10.5" stroke="#000" stroke-width="1.1"/>
</svg>
<span class="t" style="left:0.20px;top:743px;font-size:12px;color:#000;transform:scale(0.8836,1.0000);transform-origin:0 11px;">interactions = true</span>
<span class="t" style="left:0.20px;top:759px;font-size:12px;color:#000;transform:scale(0.9042,1.0000);transform-origin:0 11px;">Label33</span>
<span class="t" style="left:0.20px;top:775px;font-size:12px;color:#000;transform:scale(0.8893,1.0000);transform-origin:0 11px;">amount electrons: 500</span>
<span class="t" style="left:0.20px;top:791px;font-size:12px;color:#000;transform:scale(0.8879,1.0000);transform-origin:0 11px;">amount hydrogen: 500</span>
<span class="t" style="left:0.20px;top:807px;font-size:12px;color:#000;transform:scale(0.9042,1.0000);transform-origin:0 11px;">Label55</span>
<span class="t" style="left:263.20px;top:775px;font-size:12px;color:#000;transform:scale(0.9375,1.0000);transform-origin:0 11px;">Bc = 1,5</span>
<span class="t" style="left:263.20px;top:791px;font-size:12px;color:#000;transform:scale(0.8946,1.0000);transform-origin:0 11px;">Energy range = 100</span>
<span class="t" style="left:263.20px;top:807px;font-size:12px;color:#000;transform:scale(0.8944,1.0000);transform-origin:0 11px;">Beam_current= 10</span>
<span class="t" style="left:263.20px;top:823px;font-size:12px;color:#000;transform:scale(0.9277,1.0000);transform-origin:0 11px;">Label15</span>
<span class="t" style="left:263.20px;top:839px;font-size:12px;color:#000;transform:scale(0.9277,1.0000);transform-origin:0 11px;">Label16</span>
<span class="t" style="left:263.20px;top:855px;font-size:12px;color:#000;transform:scale(0.9277,1.0000);transform-origin:0 11px;">Label17</span>
<span class="t" style="left:263.20px;top:871px;font-size:12px;color:#000;transform:scale(0.9277,1.0000);transform-origin:0 11px;">Label18</span>
<span class="t" style="left:263.20px;top:887px;font-size:12px;color:#000;transform:scale(0.9277,1.0000);transform-origin:0 11px;">Label19</span>
<span class="t" style="left:263.20px;top:903px;font-size:12px;color:#000;transform:scale(0.9879,1.0000);transform-origin:0 11px;">sp = 0</span>
<span class="t" style="left:263.20px;top:919px;font-size:12px;color:#000;transform:scale(0.9277,1.0000);transform-origin:0 11px;">Label21</span>
<span class="t" style="left:487.20px;top:775px;font-size:12px;color:#000;transform:scale(0.9277,1.0000);transform-origin:0 11px;">Label22</span>
<span class="t" style="left:487.20px;top:791px;font-size:12px;color:#000;transform:scale(0.9277,1.0000);transform-origin:0 11px;">Label23</span>
<span class="t" style="left:487.20px;top:807px;font-size:12px;color:#000;transform:scale(0.9277,1.0000);transform-origin:0 11px;">Label24</span>
<span class="t" style="left:487.20px;top:823px;font-size:12px;color:#000;transform:scale(0.9277,1.0000);transform-origin:0 11px;">Label25</span>
<span class="t" style="left:487.20px;top:839px;font-size:12px;color:#000;transform:scale(0.9277,1.0000);transform-origin:0 11px;">Label26</span>
<span class="t" style="left:487.20px;top:855px;font-size:12px;color:#000;transform:scale(0.9043,1.0000);transform-origin:0 11px;">Bfield = 1,5</span>
<span class="t" style="left:487.20px;top:871px;font-size:12px;color:#000;transform:scale(0.9277,1.0000);transform-origin:0 11px;">Label28</span>
<span class="t" style="left:487.20px;top:887px;font-size:12px;color:#000;transform:scale(0.9277,1.0000);transform-origin:0 11px;">Label29</span>
<span class="t" style="left:487.20px;top:903px;font-size:12px;color:#000;transform:scale(0.9277,1.0000);transform-origin:0 11px;">Label30</span>
<span class="t" style="left:487.20px;top:919px;font-size:12px;color:#000;transform:scale(0.9277,1.0000);transform-origin:0 11px;">Label31</span>
<div style="position:absolute;left:0px;top:911px;width:340px;height:13px;background:#C0C0C0"></div>
<span class="t" style="left:0.20px;top:911px;font-size:12px;color:#000;transform:scale(0.8915,1.0000);transform-origin:0 11px;">Total potential + kinetic energy of all particles = 8,38207554924878E-12</span>
<span class="t" style="left:0.20px;top:927px;font-size:12px;color:#000;transform:scale(0.8862,1.0000);transform-origin:0 11px;">Kinetic energy of all particles = 8,32888171392588E-12</span>
<span class="t" style="left:0.20px;top:943px;font-size:12px;color:#9A1010;transform:scale(0.8923,1.0000);transform-origin:0 11px;">Total potential of all particles = 5,31938353229004E-14</span>
<span class="t" style="left:0.20px;top:959px;font-size:12px;color:#000;transform:scale(0.8993,1.0000);transform-origin:0 11px;">Label11</span>
<span class="t" style="left:543.20px;top:935px;font-size:12px;color:#000;transform:scale(0.8965,1.0000);transform-origin:0 11px;">1.E-9 A = 1.E-9 C/s  -&gt;  1.E-9 C/s / (1,6.E-19 C) = 6,3. E9   electrons/s  -&gt; 1 electron/(1,59 E-10 s)</span>
<span class="t" style="left:1023.20px;top:903px;font-size:12px;color:#000;transform:scale(0.9277,1.0000);transform-origin:0 11px;">Label52</span>
<div style="position:absolute;left:0px;top:1040px;width:1920px;height:40px;background:#000"></div>
<svg style="left:0;top:1040px" width="1920" height="40" viewBox="0 0 1920 40"><circle cx="456.9" cy="21.8" r="1.3" fill="rgb(35,35,35)"/><circle cx="910.2" cy="23.2" r="0.7" fill="rgb(43,43,43)"/><circle cx="1744.9" cy="18.8" r="0.7" fill="rgb(41,41,41)"/><circle cx="368.1" cy="28.7" r="1.3" fill="rgb(41,41,41)"/><circle cx="914.6" cy="25.6" r="0.7" fill="rgb(28,28,28)"/><circle cx="1218.9" cy="34.7" r="1.0" fill="rgb(40,40,40)"/><circle cx="1423.2" cy="26.9" r="0.7" fill="rgb(26,26,26)"/><circle cx="1455.8" cy="23.6" r="0.7" fill="rgb(33,33,33)"/><circle cx="1581.3" cy="10.8" r="1.3" fill="rgb(43,43,43)"/><circle cx="1766.7" cy="15.5" r="1.0" fill="rgb(49,49,49)"/><circle cx="758.3" cy="32.0" r="0.7" fill="rgb(38,38,38)"/><circle cx="1687.4" cy="3.9" r="1.0" fill="rgb(28,28,28)"/><circle cx="416.6" cy="38.6" r="1.3" fill="rgb(37,37,37)"/><circle cx="1642.0" cy="16.8" r="1.0" fill="rgb(50,50,50)"/><circle cx="1102.1" cy="21.4" r="1.3" fill="rgb(37,37,37)"/><circle cx="446.2" cy="13.5" r="1.0" fill="rgb(24,24,24)"/><circle cx="1902.7" cy="26.9" r="1.3" fill="rgb(29,29,29)"/><circle cx="1652.4" cy="38.6" r="1.3" fill="rgb(52,52,52)"/><circle cx="1092.7" cy="28.6" r="1.3" fill="rgb(30,30,30)"/><circle cx="1596.7" cy="22.9" r="0.7" fill="rgb(33,33,33)"/><circle cx="121.8" cy="34.2" r="0.7" fill="rgb(39,39,39)"/><circle cx="660.6" cy="2.7" r="0.7" fill="rgb(52,52,52)"/><circle cx="38.6" cy="17.1" r="0.7" fill="rgb(37,37,37)"/><circle cx="84.8" cy="24.6" r="1.0" fill="rgb(25,25,25)"/><circle cx="1379.4" cy="13.2" r="1.0" fill="rgb(52,52,52)"/><circle cx="970.4" cy="39.9" r="0.7" fill="rgb(33,33,33)"/><circle cx="147.8" cy="24.0" r="0.7" fill="rgb(25,25,25)"/><circle cx="1865.1" cy="11.7" r="0.7" fill="rgb(32,32,32)"/><circle cx="1324.3" cy="39.2" r="1.0" fill="rgb(34,34,34)"/><circle cx="691.6" cy="5.5" r="1.0" fill="rgb(51,51,51)"/><circle cx="723.4" cy="34.8" r="1.3" fill="rgb(36,36,36)"/><circle cx="1664.3" cy="27.2" r="1.3" fill="rgb(27,27,27)"/><circle cx="1867.9" cy="32.5" r="1.0" fill="rgb(32,32,32)"/><circle cx="1217.8" cy="28.6" r="1.0" fill="rgb(33,33,33)"/><circle cx="1877.4" cy="20.8" r="1.0" fill="rgb(41,41,41)"/><circle cx="22.0" cy="16.6" r="1.0" fill="rgb(42,42,42)"/><circle cx="38.5" cy="24.6" r="0.7" fill="rgb(44,44,44)"/><circle cx="115.4" cy="25.1" r="1.0" fill="rgb(38,38,38)"/><circle cx="1304.2" cy="14.1" r="1.0" fill="rgb(46,46,46)"/><circle cx="1417.0" cy="0.9" r="1.3" fill="rgb(25,25,25)"/><circle cx="40.8" cy="14.8" r="1.0" fill="rgb(44,44,44)"/><circle cx="573.4" cy="24.1" r="1.0" fill="rgb(29,29,29)"/><circle cx="355.7" cy="30.3" r="1.3" fill="rgb(51,51,51)"/><circle cx="507.1" cy="31.5" r="0.7" fill="rgb(27,27,27)"/><circle cx="1865.0" cy="27.3" r="1.0" fill="rgb(28,28,28)"/><circle cx="960.0" cy="26.1" r="0.7" fill="rgb(32,32,32)"/><circle cx="629.3" cy="27.1" r="1.3" fill="rgb(44,44,44)"/><circle cx="186.3" cy="24.0" r="1.3" fill="rgb(34,34,34)"/><circle cx="1600.4" cy="17.5" r="0.7" fill="rgb(51,51,51)"/><circle cx="153.5" cy="29.7" r="1.3" fill="rgb(30,30,30)"/><circle cx="866.1" cy="9.0" r="0.7" fill="rgb(27,27,27)"/><circle cx="1016.9" cy="7.6" r="1.3" fill="rgb(49,49,49)"/><circle cx="352.5" cy="11.1" r="1.3" fill="rgb(49,49,49)"/><circle cx="164.2" cy="24.8" r="0.7" fill="rgb(42,42,42)"/><circle cx="808.8" cy="20.7" r="1.0" fill="rgb(51,51,51)"/><circle cx="892.3" cy="25.4" r="1.0" fill="rgb(33,33,33)"/><circle cx="1091.2" cy="1.4" r="0.7" fill="rgb(37,37,37)"/><circle cx="383.2" cy="19.1" r="1.3" fill="rgb(50,50,50)"/><circle cx="1894.9" cy="17.4" r="0.7" fill="rgb(46,46,46)"/><circle cx="62.1" cy="18.3" r="1.3" fill="rgb(48,48,48)"/><circle cx="1436.2" cy="38.5" r="1.0" fill="rgb(41,41,41)"/><circle cx="1708.2" cy="34.5" r="1.3" fill="rgb(51,51,51)"/><circle cx="1864.3" cy="4.8" r="0.7" fill="rgb(31,31,31)"/><circle cx="67.5" cy="32.1" r="0.7" fill="rgb(40,40,40)"/><circle cx="1721.4" cy="36.0" r="0.7" fill="rgb(42,42,42)"/><circle cx="25.2" cy="29.8" r="1.3" fill="rgb(29,29,29)"/><circle cx="575.8" cy="26.5" r="1.3" fill="rgb(40,40,40)"/><circle cx="794.4" cy="37.6" r="0.7" fill="rgb(43,43,43)"/><circle cx="655.4" cy="10.1" r="1.3" fill="rgb(51,51,51)"/><circle cx="916.2" cy="31.3" r="0.7" fill="rgb(35,35,35)"/><circle cx="378.9" cy="21.4" r="0.7" fill="rgb(50,50,50)"/><circle cx="328.9" cy="31.7" r="0.7" fill="rgb(52,52,52)"/><circle cx="1581.1" cy="0.3" r="1.3" fill="rgb(44,44,44)"/><circle cx="1656.1" cy="2.0" r="0.7" fill="rgb(32,32,32)"/><circle cx="515.7" cy="21.1" r="0.7" fill="rgb(37,37,37)"/><circle cx="908.0" cy="31.1" r="0.7" fill="rgb(24,24,24)"/><circle cx="1488.5" cy="1.8" r="0.7" fill="rgb(25,25,25)"/><circle cx="927.0" cy="1.3" r="0.7" fill="rgb(46,46,46)"/><circle cx="989.6" cy="19.6" r="1.0" fill="rgb(29,29,29)"/><circle cx="137.8" cy="15.4" r="1.3" fill="rgb(36,36,36)"/><circle cx="583.9" cy="10.6" r="1.0" fill="rgb(34,34,34)"/><circle cx="237.6" cy="22.2" r="1.3" fill="rgb(46,46,46)"/><circle cx="730.1" cy="3.2" r="0.7" fill="rgb(29,29,29)"/><circle cx="716.7" cy="24.2" r="1.3" fill="rgb(49,49,49)"/><circle cx="730.1" cy="32.0" r="1.0" fill="rgb(43,43,43)"/><circle cx="101.9" cy="25.1" r="1.3" fill="rgb(48,48,48)"/><circle cx="604.7" cy="38.0" r="1.0" fill="rgb(37,37,37)"/><circle cx="34.4" cy="8.7" r="1.3" fill="rgb(32,32,32)"/><circle cx="1132.6" cy="32.1" r="1.0" fill="rgb(31,31,31)"/><circle cx="250.3" cy="1.1" r="1.0" fill="rgb(34,34,34)"/><circle cx="1860.1" cy="22.4" r="1.0" fill="rgb(51,51,51)"/><circle cx="233.2" cy="27.6" r="1.3" fill="rgb(50,50,50)"/><circle cx="1271.6" cy="35.5" r="1.0" fill="rgb(49,49,49)"/><circle cx="1281.7" cy="29.3" r="1.3" fill="rgb(42,42,42)"/><circle cx="198.0" cy="23.5" r="1.0" fill="rgb(24,24,24)"/><circle cx="275.6" cy="31.0" r="1.3" fill="rgb(25,25,25)"/><circle cx="176.3" cy="4.0" r="1.0" fill="rgb(52,52,52)"/><circle cx="344.0" cy="0.9" r="0.7" fill="rgb(50,50,50)"/><circle cx="48.9" cy="4.6" r="1.3" fill="rgb(39,39,39)"/><circle cx="1828.6" cy="23.2" r="0.7" fill="rgb(49,49,49)"/><circle cx="69.6" cy="30.7" r="1.3" fill="rgb(40,40,40)"/><circle cx="1373.1" cy="4.3" r="0.7" fill="rgb(47,47,47)"/><circle cx="1794.4" cy="2.4" r="1.3" fill="rgb(34,34,34)"/><circle cx="346.4" cy="3.1" r="1.3" fill="rgb(29,29,29)"/><circle cx="479.9" cy="24.6" r="1.0" fill="rgb(48,48,48)"/><circle cx="485.6" cy="24.0" r="1.3" fill="rgb(35,35,35)"/><circle cx="803.0" cy="3.3" r="0.7" fill="rgb(40,40,40)"/><circle cx="1868.3" cy="16.5" r="0.7" fill="rgb(47,47,47)"/><circle cx="797.3" cy="22.7" r="1.3" fill="rgb(42,42,42)"/><circle cx="1773.9" cy="27.4" r="1.3" fill="rgb(28,28,28)"/><circle cx="770.0" cy="35.5" r="0.7" fill="rgb(29,29,29)"/><circle cx="956.1" cy="19.3" r="1.3" fill="rgb(46,46,46)"/><circle cx="1825.3" cy="23.5" r="0.7" fill="rgb(51,51,51)"/><circle cx="261.7" cy="30.1" r="1.3" fill="rgb(28,28,28)"/><circle cx="990.0" cy="37.4" r="1.3" fill="rgb(51,51,51)"/><circle cx="1033.0" cy="31.2" r="1.3" fill="rgb(45,45,45)"/><circle cx="1642.2" cy="23.8" r="1.3" fill="rgb(42,42,42)"/><circle cx="1888.8" cy="35.6" r="0.7" fill="rgb(33,33,33)"/><circle cx="514.7" cy="32.2" r="0.7" fill="rgb(30,30,30)"/><circle cx="1094.2" cy="9.6" r="0.7" fill="rgb(39,39,39)"/><circle cx="803.4" cy="27.9" r="1.3" fill="rgb(46,46,46)"/><circle cx="395.1" cy="23.2" r="1.3" fill="rgb(52,52,52)"/><circle cx="1069.7" cy="19.3" r="0.7" fill="rgb(47,47,47)"/><circle cx="1644.8" cy="16.0" r="0.7" fill="rgb(47,47,47)"/><circle cx="897.4" cy="9.2" r="1.3" fill="rgb(31,31,31)"/><circle cx="1378.0" cy="27.0" r="1.0" fill="rgb(30,30,30)"/><circle cx="464.8" cy="7.6" r="0.7" fill="rgb(32,32,32)"/><circle cx="359.4" cy="28.2" r="0.7" fill="rgb(51,51,51)"/><circle cx="1727.5" cy="10.2" r="0.7" fill="rgb(51,51,51)"/><circle cx="601.8" cy="16.9" r="0.7" fill="rgb(47,47,47)"/><circle cx="226.5" cy="10.6" r="0.7" fill="rgb(33,33,33)"/><circle cx="684.8" cy="23.2" r="1.0" fill="rgb(45,45,45)"/><circle cx="13.2" cy="13.4" r="1.0" fill="rgb(37,37,37)"/><circle cx="932.9" cy="8.4" r="1.3" fill="rgb(42,42,42)"/><circle cx="1834.2" cy="15.6" r="1.0" fill="rgb(41,41,41)"/><circle cx="228.8" cy="11.0" r="1.0" fill="rgb(45,45,45)"/><circle cx="216.1" cy="35.5" r="0.7" fill="rgb(32,32,32)"/><circle cx="1013.2" cy="28.0" r="1.0" fill="rgb(45,45,45)"/><circle cx="1454.1" cy="11.8" r="1.3" fill="rgb(45,45,45)"/><circle cx="1255.8" cy="32.2" r="0.7" fill="rgb(32,32,32)"/><circle cx="1448.0" cy="38.5" r="1.3" fill="rgb(45,45,45)"/><circle cx="1029.4" cy="4.5" r="1.3" fill="rgb(39,39,39)"/><circle cx="676.1" cy="28.7" r="1.3" fill="rgb(45,45,45)"/><circle cx="1087.5" cy="7.3" r="1.3" fill="rgb(44,44,44)"/><circle cx="1211.3" cy="7.2" r="1.3" fill="rgb(52,52,52)"/><circle cx="872.1" cy="4.3" r="0.7" fill="rgb(41,41,41)"/><circle cx="1768.0" cy="25.8" r="1.3" fill="rgb(44,44,44)"/><circle cx="806.7" cy="12.0" r="1.0" fill="rgb(29,29,29)"/><circle cx="926.2" cy="31.3" r="0.7" fill="rgb(46,46,46)"/><circle cx="206.2" cy="7.2" r="1.3" fill="rgb(41,41,41)"/><circle cx="1105.6" cy="15.7" r="1.0" fill="rgb(27,27,27)"/><circle cx="520.0" cy="2.1" r="0.7" fill="rgb(28,28,28)"/><circle cx="919.1" cy="10.9" r="1.3" fill="rgb(46,46,46)"/><circle cx="679.9" cy="13.3" r="1.0" fill="rgb(36,36,36)"/><circle cx="1039.7" cy="30.9" r="1.0" fill="rgb(35,35,35)"/><circle cx="1626.0" cy="4.5" r="1.3" fill="rgb(32,32,32)"/><circle cx="191.3" cy="4.5" r="1.3" fill="rgb(48,48,48)"/><circle cx="215.2" cy="27.9" r="1.0" fill="rgb(42,42,42)"/><circle cx="1286.7" cy="15.6" r="0.7" fill="rgb(47,47,47)"/><circle cx="1136.5" cy="5.9" r="0.7" fill="rgb(36,36,36)"/><circle cx="1045.9" cy="6.8" r="0.7" fill="rgb(29,29,29)"/><circle cx="1667.7" cy="14.8" r="0.7" fill="rgb(33,33,33)"/><circle cx="1617.2" cy="17.8" r="1.0" fill="rgb(37,37,37)"/><circle cx="606.6" cy="36.2" r="1.3" fill="rgb(33,33,33)"/><circle cx="955.8" cy="21.2" r="1.0" fill="rgb(46,46,46)"/><circle cx="1719.7" cy="26.7" r="1.3" fill="rgb(24,24,24)"/><circle cx="365.7" cy="25.4" r="1.3" fill="rgb(27,27,27)"/><circle cx="448.9" cy="6.9" r="1.0" fill="rgb(44,44,44)"/><circle cx="381.9" cy="31.3" r="0.7" fill="rgb(30,30,30)"/><circle cx="1560.4" cy="37.0" r="0.7" fill="rgb(38,38,38)"/><circle cx="1086.7" cy="38.4" r="0.7" fill="rgb(52,52,52)"/><circle cx="260.3" cy="31.7" r="0.7" fill="rgb(43,43,43)"/><circle cx="49.0" cy="24.7" r="0.7" fill="rgb(40,40,40)"/><circle cx="957.3" cy="0.8" r="1.0" fill="rgb(34,34,34)"/><circle cx="630.4" cy="13.8" r="0.7" fill="rgb(46,46,46)"/><circle cx="154.6" cy="33.6" r="0.7" fill="rgb(48,48,48)"/><circle cx="1374.6" cy="29.6" r="0.7" fill="rgb(34,34,34)"/><circle cx="1788.9" cy="34.5" r="1.3" fill="rgb(37,37,37)"/><circle cx="1453.2" cy="19.4" r="0.7" fill="rgb(27,27,27)"/><circle cx="784.3" cy="33.8" r="0.7" fill="rgb(46,46,46)"/><circle cx="751.7" cy="18.9" r="1.3" fill="rgb(26,26,26)"/><circle cx="1635.4" cy="8.3" r="1.0" fill="rgb(39,39,39)"/><circle cx="44.9" cy="18.3" r="1.0" fill="rgb(46,46,46)"/><circle cx="841.7" cy="18.2" r="1.3" fill="rgb(25,25,25)"/><circle cx="492.7" cy="34.0" r="1.3" fill="rgb(38,38,38)"/><circle cx="694.1" cy="16.1" r="0.7" fill="rgb(24,24,24)"/><circle cx="496.7" cy="14.8" r="1.0" fill="rgb(51,51,51)"/><circle cx="1024.9" cy="6.4" r="0.7" fill="rgb(24,24,24)"/><circle cx="1122.3" cy="20.1" r="0.7" fill="rgb(44,44,44)"/><circle cx="267.4" cy="24.3" r="1.0" fill="rgb(38,38,38)"/><circle cx="354.8" cy="33.7" r="1.0" fill="rgb(36,36,36)"/><circle cx="610.3" cy="1.3" r="0.7" fill="rgb(46,46,46)"/><circle cx="459.3" cy="1.6" r="0.7" fill="rgb(39,39,39)"/><circle cx="1745.2" cy="35.3" r="0.7" fill="rgb(31,31,31)"/><circle cx="747.0" cy="7.6" r="1.3" fill="rgb(34,34,34)"/><circle cx="223.0" cy="36.5" r="0.7" fill="rgb(43,43,43)"/><circle cx="1550.3" cy="11.6" r="1.0" fill="rgb(49,49,49)"/><circle cx="1515.4" cy="38.5" r="0.7" fill="rgb(39,39,39)"/><circle cx="1077.4" cy="1.2" r="1.3" fill="rgb(34,34,34)"/><circle cx="1906.2" cy="12.7" r="1.3" fill="rgb(25,25,25)"/><circle cx="836.0" cy="3.6" r="0.7" fill="rgb(43,43,43)"/><circle cx="201.2" cy="27.2" r="0.7" fill="rgb(24,24,24)"/><circle cx="965.8" cy="19.3" r="1.3" fill="rgb(30,30,30)"/><circle cx="978.7" cy="13.2" r="1.0" fill="rgb(52,52,52)"/><circle cx="652.8" cy="19.1" r="1.3" fill="rgb(35,35,35)"/><circle cx="65.7" cy="12.2" r="1.3" fill="rgb(43,43,43)"/><circle cx="1817.4" cy="3.5" r="0.7" fill="rgb(33,33,33)"/><circle cx="1631.8" cy="4.6" r="1.3" fill="rgb(36,36,36)"/><circle cx="641.6" cy="27.2" r="0.7" fill="rgb(36,36,36)"/><circle cx="1607.9" cy="34.6" r="1.3" fill="rgb(36,36,36)"/><circle cx="689.7" cy="7.4" r="1.0" fill="rgb(49,49,49)"/><circle cx="841.8" cy="17.8" r="1.0" fill="rgb(46,46,46)"/><circle cx="662.7" cy="32.8" r="1.3" fill="rgb(40,40,40)"/><circle cx="1445.3" cy="36.6" r="1.0" fill="rgb(46,46,46)"/><circle cx="1823.0" cy="1.7" r="1.3" fill="rgb(29,29,29)"/><circle cx="1443.2" cy="32.9" r="1.3" fill="rgb(26,26,26)"/><circle cx="1300.5" cy="3.9" r="1.3" fill="rgb(31,31,31)"/><circle cx="1619.8" cy="25.7" r="1.3" fill="rgb(52,52,52)"/><circle cx="1674.7" cy="18.0" r="1.3" fill="rgb(52,52,52)"/><circle cx="1241.5" cy="39.9" r="0.7" fill="rgb(24,24,24)"/><circle cx="374.1" cy="31.5" r="1.0" fill="rgb(27,27,27)"/><circle cx="1092.3" cy="4.4" r="1.3" fill="rgb(26,26,26)"/><circle cx="404.0" cy="27.5" r="1.3" fill="rgb(28,28,28)"/><circle cx="274.7" cy="39.4" r="0.7" fill="rgb(27,27,27)"/><circle cx="552.0" cy="8.4" r="1.3" fill="rgb(51,51,51)"/><circle cx="989.9" cy="20.2" r="1.0" fill="rgb(43,43,43)"/><circle cx="1514.2" cy="21.4" r="1.0" fill="rgb(30,30,30)"/><circle cx="341.0" cy="3.2" r="0.7" fill="rgb(50,50,50)"/><circle cx="1148.4" cy="34.4" r="0.7" fill="rgb(27,27,27)"/><circle cx="1810.9" cy="10.2" r="1.0" fill="rgb(27,27,27)"/></svg>
<div style="position:absolute;left:491px;top:1040px;width:48px;height:38px;background:#3A3A3A"></div>
<div style="position:absolute;left:250px;top:1078px;width:40px;height:2px;background:#F4C4AC"></div>
<div style="position:absolute;left:299px;top:1078px;width:40px;height:2px;background:#F4C4AC"></div>
<div style="position:absolute;left:348px;top:1078px;width:40px;height:2px;background:#F4C4AC"></div>
<div style="position:absolute;left:397px;top:1078px;width:40px;height:2px;background:#F4C4AC"></div>
<div style="position:absolute;left:446px;top:1078px;width:40px;height:2px;background:#F4C4AC"></div>
<div style="position:absolute;left:491px;top:1078px;width:48px;height:2px;background:#F4C4AC"></div>
<svg style="left:0;top:1040px" width="560" height="40" viewBox="0 1040 560 40">
<!-- windows logo -->
<path d="M16 1053.5 L22 1052.7 V1059 H16 Z M23 1052.5 L32 1051.5 V1059 H23 Z M16 1060 H22 V1066.4 L16 1065.6 Z M23 1060 H32 V1067.6 L23 1066.6 Z" fill="#FFFFFF"/>
<!-- task view -->
<rect x="66.5" y="1053.5" width="11" height="13" fill="none" stroke="#FFF" stroke-width="1"/>
<path d="M64.5 1055.5 H62.5 V1064.5 H64.5 M79.5 1055.5 H81.5 V1064.5 H79.5" fill="none" stroke="#FFF" stroke-width="1"/>
<!-- explorer -->
<path d="M112 1052 H119 L121 1054 H133 V1068 H112 Z" fill="#F2D57C"/>
<path d="M112 1054 H133 V1068 H112 Z" fill="#F8E09A"/>
<path d="M114.5 1068.5 V1062 H130.5 V1068.5 H127 V1065 H118 V1068.5 Z" fill="#2E9BE0"/>
<!-- outlook -->
<path d="M160 1056 L168 1048 H180 V1068 H160 Z" fill="#F0C860"/>
<path d="M162 1052 H182 V1066 H162 Z" fill="#FBF0D8"/>
<path d="M162 1052 L172 1060 L182 1052" fill="none" stroke="#E8B040" stroke-width="1.2"/>
<circle cx="174" cy="1062" r="7" fill="#F0C020"/>
<path d="M170.5 1061 L174 1064 L177.5 1061" fill="none" stroke="#906000" stroke-width="1.2"/>
<!-- edge -->
<path d="M212 1061 C212 1052 218 1049.5 223 1049.5 C229 1049.5 231.5 1054 231.5 1060.5 H217.5 C218 1065 221.5 1067 225 1067 C228 1067 230 1066 231 1065.5 V1069.5 C229 1070.5 227 1071 224 1071 C217 1071 212 1067 212 1061 Z M217.5 1057 H226 C226 1054.5 224.5 1053 222 1053 C219.5 1053 218 1054.5 217.5 1057 Z" fill="#1D7FD8"/>
<!-- chrome -->
<circle cx="270" cy="1060" r="11" fill="#DB4437"/>
<path d="M270 1060 L260.5 1065.5 A11 11 0 0 0 275.5 1069.5 Z" fill="#0F9D58"/>
<path d="M270 1060 L279.5 1054.5 A11 11 0 0 1 275.5 1069.5 Z" fill="#F4B400"/>
<path d="M270 1060 L260.5 1054.5 A11 11 0 0 0 260.5 1065.5 Z" fill="#0F9D58"/>
<circle cx="270" cy="1060" r="5" fill="#FFFFFF"/>
<circle cx="270" cy="1060" r="4" fill="#4285F4"/>
<!-- museum -->
<path d="M319 1049 L330 1055 H308 Z" fill="#E8E070"/>
<rect x="308" y="1055" width="22" height="2" fill="#E8E070"/>
<rect x="310" y="1058" width="3" height="10" fill="#E8E070"/><rect x="314" y="1058" width="3" height="10" fill="#F0F0F0"/>
<rect x="318" y="1058" width="3" height="10" fill="#E8E070"/><rect x="322" y="1058" width="3" height="10" fill="#A0C8C0"/>
<rect x="326" y="1058" width="3" height="10" fill="#E8E070"/>
<rect x="308" y="1068" width="22" height="3" fill="#E8E070"/>
<!-- word -->
<path d="M358 1050 L376 1048 V1071 L358 1069 Z" fill="#C8D8F0"/>
<path d="M356 1052 L364 1050 V1068 L356 1066 Z" fill="#2A5BB0"/>
<rect x="365" y="1053" width="10" height="2" fill="#2A5BB0"/><rect x="365" y="1057" width="10" height="2" fill="#2A5BB0"/>
<rect x="365" y="1061" width="10" height="2" fill="#2A5BB0"/><rect x="365" y="1065" width="10" height="2" fill="#2A5BB0"/>
<!-- paint -->
<ellipse cx="416" cy="1062" rx="11" ry="8" fill="#C8E0F0" transform="rotate(-20 416 1062)"/>
<circle cx="409" cy="1060" r="2" fill="#E05050"/><circle cx="413" cy="1057" r="2" fill="#50C050"/><circle cx="418" cy="1055.5" r="2" fill="#F0C040"/>
<circle cx="415" cy="1062.5" r="1.3" fill="#000"/>
<path d="M416.5 1071 L426 1050" stroke="#E09040" stroke-width="2"/>
<path d="M425 1051 L428 1048 L429 1051 Z" fill="#F0D0A0"/>
<!-- Q icon -->
<rect x="455.5" y="1049.5" width="20" height="20" fill="#F0F0FF" stroke="#8080D0" stroke-width="2"/>
<circle cx="462" cy="1061" r="4" fill="#6050B0"/>
<path d="M465 1054 L472 1058 L470 1066 L466 1063" fill="none" stroke="#7070C0" stroke-width="1"/>
<!-- app torch -->
<ellipse cx="514" cy="1062" rx="10" ry="12" fill="#0A10C0" transform="rotate(25 514 1062)"/>
<path d="M505 1071 L518 1058" stroke="#404040" stroke-width="4.2"/>
<path d="M505 1071 L518 1058" stroke="#D8D8D8" stroke-width="2.2"/>
<path d="M517 1059 C515 1055 517 1050 522 1048 C526 1050 527 1055 524 1059 C522 1061 519 1061 517 1059 Z" fill="#E83018" stroke="#F8E0D0" stroke-width="0.6"/>
<path d="M518.5 1058.5 C518 1056 519.5 1053 522 1052 C523.5 1054 523.5 1057 521.5 1059 Z" fill="#F8D040"/>
</svg>
<svg style="left:1680px;top:1040px" width="240" height="40" viewBox="1680 1040 240 40">
<path d="M1687.5 1063.5 L1693 1058 L1698.5 1063.5" fill="none" stroke="#FFF" stroke-width="1.1"/>
<path d="M1709.5 1057.5 H1712.5 L1716.5 1053.5 V1069.5 L1712.5 1065.5 H1709.5 Z" fill="none" stroke="#FFF" stroke-width="1"/>
<path d="M1718.5 1058 Q1720.5 1061.5 1718.5 1065 M1721.5 1056 Q1724.5 1061.5 1721.5 1067 M1724.5 1054 Q1728.5 1061.5 1724.5 1069" fill="none" stroke="#FFF" stroke-width="1"/>
<path d="M1740 1070 L1749 1057 L1751 1058.5 L1742.5 1071 Z" fill="none" stroke="#FFF" stroke-width="1"/>
<path d="M1742 1065 C1737 1066 1737 1071 1742 1071 M1749 1064 C1753 1064 1753 1066 1750 1067" fill="none" stroke="#FFF" stroke-width="1"/>
<path d="M1879.5 1052.5 H1894.5 V1063.5 H1889.5 L1887 1066.5 L1884.5 1063.5 H1879.5 Z" fill="none" stroke="#FFF" stroke-width="1"/>
<rect x="1915" y="1040" width="1" height="40" fill="#505050"/>
</svg>
<span class="t" style="left:1769.20px;top:1054px;font-size:12px;color:#FFF;transform:scale(0.7750,1.0000);transform-origin:0 11px;">ESP</span>
<span class="t" style="left:1817.20px;top:1046px;font-size:12px;color:#FFF;transform:scale(0.9533,1.0000);transform-origin:0 11px;">21:06</span>
<span class="t" style="left:1803.20px;top:1063px;font-size:12px;color:#FFF;transform:scale(0.9590,1.0000);transform-origin:0 11px;">19/01/2017</span>
</body></html>
